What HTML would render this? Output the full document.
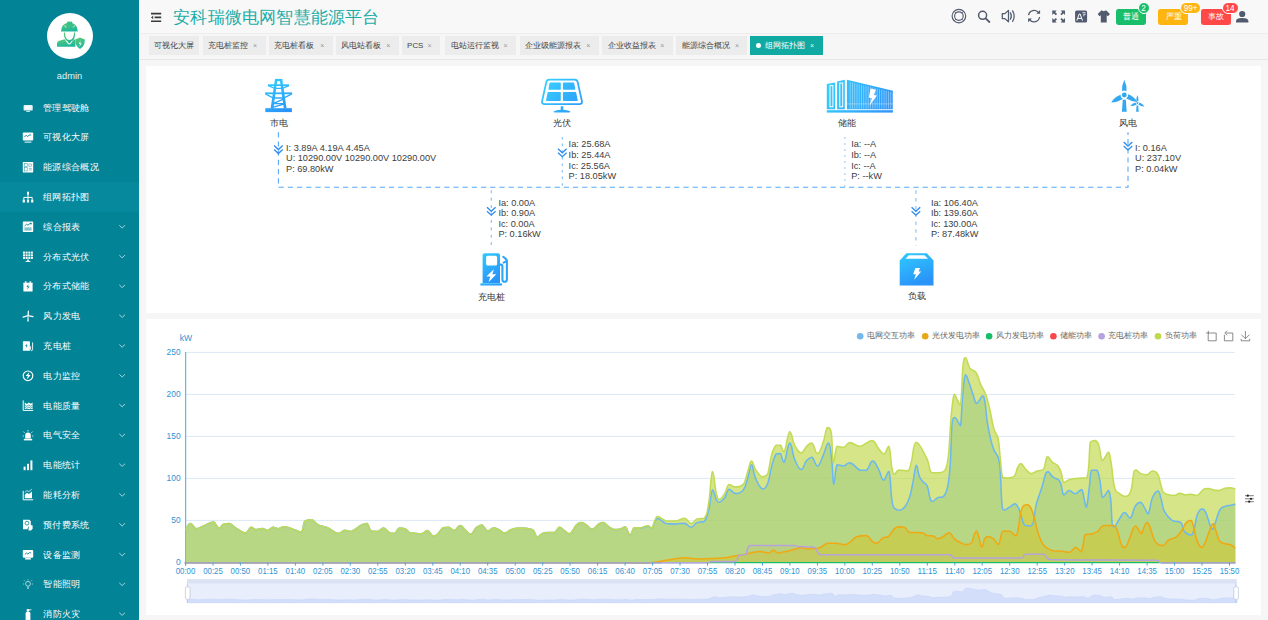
<!DOCTYPE html>
<html lang="zh"><head><meta charset="utf-8"><title>安科瑞微电网智慧能源平台</title>
<style>
*{box-sizing:border-box}
html,body{margin:0;padding:0}
body{width:1268px;height:620px;overflow:hidden;background:#f6f6f6;font-family:"Liberation Sans", sans-serif;position:relative}
.abs{position:absolute;left:0;top:0;overflow:visible}
div{position:absolute}
.side{left:0;top:0;width:139px;height:620px;background:#028396}
.active{left:0;width:139px;height:29.8px;background:#06899c}
.avatar{left:46.5px;top:13.4px;width:46px;height:46px;border-radius:50%;background:#fff}
.admin{left:0;width:139px;top:71.1px;text-align:center;font-size:9.3px;line-height:11px;color:#e4f1f4}
.mi{left:43.2px;font-size:9.25px;line-height:14px;height:14px;color:#fff;white-space:nowrap}
.hdr{left:139px;top:0;width:1129px;height:34.2px;background:#f8f8f8;border-bottom:1.2px solid #ededed}
.title{left:173.2px;top:5.6px;font-size:17.2px;line-height:23px;color:#1aada8;white-space:nowrap;width:206.2px}
.lvl{top:8.6px;height:16px;border-radius:2.4px;color:#fff;font-size:7.95px;line-height:16.4px}
.lvl span{position:absolute;top:0;white-space:nowrap}
.bdg{top:2.4px;height:11.6px;border-radius:6px;border:0.7px solid #fff;color:#fff;font-size:8.2px;line-height:11.1px;text-align:center}
.tabbar{left:139px;top:34.2px;width:1129px;height:25.6px;background:#f6f6f6;border-bottom:1px solid #e7e7e7}
.tab{top:35.8px;height:19.6px;background:#ececec;color:#444;font-size:7.95px;line-height:19.6px;padding-left:5.3px;white-space:nowrap}
.tab .x{position:absolute;right:8.4px;top:0;font-size:7px;color:#999}
.tab.on{background:#10aaa3;color:#fff;padding-left:14.6px}
.tab.on .x{color:#e6f7f6}
.tab.on i{position:absolute;left:6px;top:7.3px;width:5px;height:5px;border-radius:50%;background:#fff}
.jt{text-align:justify;text-align-last:justify;white-space:nowrap}
.tab .t{display:inline-block;position:static;height:19.6px;vertical-align:top}
.p1{left:146px;top:66.3px;width:1115.2px;height:246.5px;background:#fff}
.p2{left:146px;top:319.2px;width:1115.2px;height:295.7px;background:#fff}
.nl{font-size:9px;line-height:10px;color:#333;white-space:nowrap}
.dt{font-size:9.2px;line-height:10.57px;color:#3c3c3c;white-space:nowrap}
.lg{top:331.4px;font-size:7.9px;line-height:10px;color:#666;white-space:nowrap}
</style></head>
<body>
<div class="side"></div>
<div class="active" style="top:182.3px"></div>
<div class="avatar"></div>
<div class="admin">admin</div>
<svg class="abs" width="139" height="620" viewBox="0 0 139 620"><defs><linearGradient id="ga" x1="0" y1="0" x2="0.3" y2="1"><stop offset="0" stop-color="#5fcb76"/><stop offset="1" stop-color="#1fb79b"/></linearGradient></defs><g fill="url(#ga)"><path d="M61 31.6 q0.3 -7.4 6 -8.6 q2.4 -1.2 4.8 0 q5.6 1.2 6 8.6 z"/><rect x="66.9" y="21.6" width="5.4" height="3" rx="1"/><path d="M63.8 32.4 h1.2 q0 7 4.4 7.6 q4.4 -0.6 4.6 -7.6 h1.2 q0 7.6 -4.2 9 l-0.8 1.8 h-1.6 l-0.8 -1.8 q-4 -1.6 -4 -9z"/><path d="M57 46.8 v-3 q0 -2.4 3 -3.2 l4.6 -1.4 l3.6 5 h2.2 l3.4 -5 l1.6 0.5 v7.1z"/><path d="M75.2 39.4 l4.8 -1.8 l4.8 1.8 q0.2 6.6 -4.8 9.6 q-5 -3 -4.8 -9.6z"/></g><path d="M64.6 25.4 l1.4 2.2 M74.6 25.4 l-1.4 2.2" stroke="#fff" stroke-width="0.7"/><path d="M80.6 40.6 l-2 3.4 h1.5 l-0.9 3 l2.6 -3.8 h-1.6z" fill="#eafaf0"/><rect x="23.6" y="105" width="9.1" height="5.6" rx="1.2" fill="#e6f3f6"/><rect x="25.4" y="106.7" width="5.4" height="1.6" fill="#fff"/><rect x="26.3" y="110.8" width="3.6" height="1.1" fill="#d5ebef"/><rect x="22.8" y="132.4" width="10.4" height="8.2" rx="0.8" fill="#fff"/><path d="M24.4 137 l1.8 -1.8 l1.6 1.4 l1.4 -1.6 l1.9 0" fill="none" stroke="#028396" stroke-width="0.9"/><rect x="24.6" y="141.6" width="6.8" height="1" fill="#fff"/><rect x="22.8" y="162" width="10.4" height="10.4" rx="0.6" fill="#fff"/><rect x="24.3" y="163.4" width="2.9" height="3" fill="none" stroke="#028396" stroke-width="0.55" stroke-opacity="0.8"/><rect x="24.3" y="167.6" width="2.9" height="3.4" fill="none" stroke="#028396" stroke-width="0.55" stroke-opacity="0.8"/><rect x="28.9" y="164" width="2.8" height="2.2" fill="none" stroke="#028396" stroke-width="0.55" stroke-opacity="0.8"/><path d="M28.8 168.4 h3 M28.8 170 h3" stroke="#028396" stroke-width="0.6" stroke-opacity="0.8"/><rect x="27" y="191.7" width="2" height="3" fill="#fff"/><path d="M28 194.4 v3 M23.8 199.6 v-2.2 h8.4 v2.2 M28 197.2 v2.4" fill="none" stroke="#fff" stroke-width="1"/><rect x="22.7" y="199.6" width="2.2" height="2.9" fill="#fff"/><rect x="26.9" y="199.6" width="2.2" height="2.9" fill="#fff"/><rect x="31.1" y="199.6" width="2.2" height="2.9" fill="#fff"/><rect x="22.8" y="221.6" width="10.4" height="10.4" rx="0.8" fill="#fff"/><path d="M24.6 226 l2 -1.8 l1.4 1 l2.6 -2.2" fill="none" stroke="#028396" stroke-width="0.9"/><circle cx="30.9" cy="223.6" r="0.9" fill="#028396"/><line x1="24.4" y1="228.1" x2="31.6" y2="228.1" stroke="#028396" stroke-width="0.8"/><line x1="24.4" y1="229.9" x2="31.6" y2="229.9" stroke="#028396" stroke-width="0.8"/><path d="M119.3 225.3 l2.85 2.7 l2.85 -2.7" fill="none" stroke="#b9dde4" stroke-width="0.9"/><rect x="23" y="251.6" width="2" height="2" fill="#fff"/><rect x="25.6" y="251.6" width="2" height="2" fill="#fff"/><rect x="28.3" y="251.6" width="2" height="2" fill="#fff"/><rect x="30.9" y="251.6" width="2" height="2" fill="#fff"/><rect x="23" y="254.3" width="2" height="2" fill="#fff"/><rect x="25.6" y="254.3" width="2" height="2" fill="#fff"/><rect x="28.3" y="254.3" width="2" height="2" fill="#fff"/><rect x="30.9" y="254.3" width="2" height="2" fill="#fff"/><rect x="23" y="256.9" width="2" height="2" fill="#fff"/><rect x="25.6" y="256.9" width="2" height="2" fill="#fff"/><rect x="28.3" y="256.9" width="2" height="2" fill="#fff"/><rect x="30.9" y="256.9" width="2" height="2" fill="#fff"/><rect x="27.2" y="259.5" width="1.6" height="1.8" fill="#fff"/><rect x="25.6" y="260.9" width="4.8" height="1" fill="#fff"/><path d="M119.3 255.1 l2.85 2.7 l2.85 -2.7" fill="none" stroke="#b9dde4" stroke-width="0.9"/><rect x="23.4" y="282.8" width="9.2" height="8.8" rx="0.5" fill="#fff"/><rect x="24.8" y="281.4" width="1.8" height="1.4" fill="#fff"/><rect x="29.4" y="281.4" width="1.8" height="1.4" fill="#fff"/><path d="M28.6 284.2 l-2.2 2.8 h1.5 l-0.6 2.4 l2.3 -3 h-1.5z" fill="#028396"/><path d="M119.3 284.9 l2.85 2.7 l2.85 -2.7" fill="none" stroke="#b9dde4" stroke-width="0.9"/><path d="M28.1 315.3 L28.4 311.2 M27.9 315.7 L23.2 317.2 M28.2 315.7 L32.9 316.6" stroke="#fff" stroke-width="1.3" stroke-linecap="round" fill="none"/><path d="M27.6 316.6 h0.9 l0.3 5 h-1.5z" fill="#fff"/><path d="M119.3 314.7 l2.85 2.7 l2.85 -2.7" fill="none" stroke="#b9dde4" stroke-width="0.9"/><rect x="22.9" y="341.2" width="7" height="9.6" rx="0.5" fill="#fff"/><path d="M27 343.8 l-2 2.3 h1.3 l-0.5 2 l2 -2.5 h-1.3z" fill="#028396"/><path d="M30.6 346.2 v3.2 q0 1.2 1 1.2 q1 0 1 -1.2 v-7" fill="none" stroke="#fff" stroke-width="0.9"/><path d="M119.3 344.5 l2.85 2.7 l2.85 -2.7" fill="none" stroke="#b9dde4" stroke-width="0.9"/><circle cx="28" cy="375.8" r="4.8" fill="none" stroke="#fff" stroke-width="1.2"/><path d="M29.4 371.9 l-3.8 4.2 h2.2 l-1 3.5 l3.9 -4.6 h-2.3z" fill="#fff"/><path d="M119.3 374.3 l2.85 2.7 l2.85 -2.7" fill="none" stroke="#b9dde4" stroke-width="0.9"/><path d="M23.2 400.4 v10 h10" fill="none" stroke="#fff" stroke-width="1"/><path d="M24.8 402.6 l2 1.4 l2 -1.6 l2 1.4 l1.8 -1.4 v6.6 h-7.8z" fill="#fff"/><path d="M24.8 405.2 l2 1.2 l2 -1.4 l2 1.2 l1.8 -1.2" fill="none" stroke="#028396" stroke-width="0.7"/><path d="M24.8 407.2 l2 1.2 l2 -1.4 l2 1.2 l1.8 -1.2" fill="none" stroke="#028396" stroke-width="0.7"/><path d="M119.3 404.1 l2.85 2.7 l2.85 -2.7" fill="none" stroke="#b9dde4" stroke-width="0.9"/><path d="M25.2 438.4 v-3.2 q0 -2.8 2.8 -2.8 q2.8 0 2.8 2.8 v3.2z" fill="#fff"/><rect x="23.8" y="438.8" width="8.4" height="1.6" fill="#fff"/><path d="M28 431.6 v-1.6 M24.6 432.8 l-1.2 -1.2 M31.4 432.8 l1.2 -1.2 M23.9 436 h-1.3 M32.1 436 h1.3" stroke="#fff" stroke-width="0.8" fill="none"/><path d="M119.3 433.9 l2.85 2.7 l2.85 -2.7" fill="none" stroke="#b9dde4" stroke-width="0.9"/><rect x="23.6" y="466.6" width="2" height="3.6" fill="#fff"/><rect x="27" y="463.8" width="2" height="6.4" fill="#fff"/><rect x="30.4" y="460.4" width="2" height="9.8" fill="#fff"/><path d="M119.3 463.7 l2.85 2.7 l2.85 -2.7" fill="none" stroke="#b9dde4" stroke-width="0.9"/><path d="M23.2 490.8 v9 h10" fill="none" stroke="#fff" stroke-width="1"/><path d="M24.8 494.8 l2.2 -2 l1.8 1.2 l3.2 -2.6 v6.8 h-7.2z" fill="#fff"/><path d="M24.8 492.4 l2.2 -1.8 l1.8 1 l3 -2.4" fill="none" stroke="#fff" stroke-width="0.7"/><path d="M119.3 493.5 l2.85 2.7 l2.85 -2.7" fill="none" stroke="#b9dde4" stroke-width="0.9"/><path d="M23 519.8 h6.4 l1.4 1.4 v5.4 h-2.4 l-1 2.6 h-4.4z" fill="#fff"/><circle cx="27" cy="523.2" r="1.9" fill="none" stroke="#028396" stroke-width="0.8"/><path d="M29 524.4 l3.6 1 v3.4 l-1.6 1.6 h-2.6z" fill="#fff"/><path d="M119.3 523.3 l2.85 2.7 l2.85 -2.7" fill="none" stroke="#b9dde4" stroke-width="0.9"/><rect x="22.8" y="550" width="10.4" height="7.8" rx="1" fill="#fff"/><path d="M24.8 554.4 l1.8 -1.4 l1.4 1.2 l1.4 -1.6 l1.8 0.4" fill="none" stroke="#028396" stroke-width="0.9"/><path d="M25.6 558 h4.8 l0.8 1.4 h-6.4z" fill="#fff"/><path d="M119.3 553.1 l2.85 2.7 l2.85 -2.7" fill="none" stroke="#b9dde4" stroke-width="0.9"/><circle cx="28" cy="583.8" r="2.4" fill="none" stroke="#cfe7ec" stroke-width="0.8"/><path d="M27 587.2 h2 M27.2 588.4 h1.6" stroke="#cfe7ec" stroke-width="0.8"/><path d="M28 580.4 v-1.2 M24.9 581.2 l-1 -1 M31.1 581.2 l1 -1 M24.2 584 h-1.2 M31.8 584 h1.2" stroke="#cfe7ec" stroke-width="0.7" fill="none"/><path d="M119.3 582.9 l2.85 2.7 l2.85 -2.7" fill="none" stroke="#b9dde4" stroke-width="0.9"/><rect x="25.6" y="611.8" width="4.8" height="9" rx="1.6" fill="#fff"/><path d="M27 609.6 h2 v1.6 h-2z M29 609.8 h2.4" stroke="#fff" stroke-width="0.8" fill="#fff"/><path d="M119.3 612.7 l2.85 2.7 l2.85 -2.7" fill="none" stroke="#b9dde4" stroke-width="0.9"/></svg>
<div class="mi jt" style="top:100.6px;width:46.2px">管理驾驶舱</div>
<div class="mi jt" style="top:130.4px;width:46.2px">可视化大屏</div>
<div class="mi jt" style="top:160.2px;width:55.5px">能源综合概况</div>
<div class="mi jt" style="top:190px;width:46.2px">组网拓扑图</div>
<div class="mi jt" style="top:219.8px;width:37px">综合报表</div>
<div class="mi jt" style="top:249.6px;width:46.2px">分布式光伏</div>
<div class="mi jt" style="top:279.4px;width:46.2px">分布式储能</div>
<div class="mi jt" style="top:309.2px;width:37px">风力发电</div>
<div class="mi jt" style="top:339px;width:27.8px">充电桩</div>
<div class="mi jt" style="top:368.8px;width:37px">电力监控</div>
<div class="mi jt" style="top:398.6px;width:37px">电能质量</div>
<div class="mi jt" style="top:428.4px;width:37px">电气安全</div>
<div class="mi jt" style="top:458.2px;width:37px">电能统计</div>
<div class="mi jt" style="top:488px;width:37px">能耗分析</div>
<div class="mi jt" style="top:517.8px;width:46.2px">预付费系统</div>
<div class="mi jt" style="top:547.6px;width:37px">设备监测</div>
<div class="mi jt" style="top:577.4px;width:37px">智能照明</div>
<div class="mi jt" style="top:607.2px;width:37px">消防火灾</div>
<div class="hdr"></div>
<div class="title jt">安科瑞微电网智慧能源平台</div>
<svg class="abs" style="left:139px" width="1129" height="34" viewBox="139 0 1129 34"><path d="M151 13.6 h10.2 M154.6 17.4 h6.6 M151 21.3 h10.2" stroke="#3a3a3a" stroke-width="1.6" fill="none"/><path d="M153.2 15.6 l-2.2 1.8 l2.2 1.8z" fill="#444"/><circle cx="958.9" cy="16.1" r="6.8" fill="none" stroke="#515a6e" stroke-width="1.15"/><circle cx="958.9" cy="16.1" r="4.3" fill="none" stroke="#515a6e" stroke-width="1.15"/><path d="M954 11.2 l1.9 1.9 M963.8 11.2 l-1.9 1.9 M954 21 l1.9 -1.9 M963.8 21 l-1.9 -1.9" stroke="#515a6e" stroke-width="0.9"/><circle cx="982.6" cy="15.3" r="4" fill="none" stroke="#515a6e" stroke-width="1.5"/><path d="M985.6 18.4 l3.8 3.6" stroke="#515a6e" stroke-width="1.8" stroke-linecap="round"/><path d="M1002.3 13.6 h2.6 l3.6 -3.2 v11.4 l-3.6 -3.2 h-2.6z" fill="none" stroke="#515a6e" stroke-width="1.25" stroke-linejoin="round"/><path d="M1010.4 12.9 q1.9 3.2 0 6.4 M1012.6 10.9 q3.2 5.2 0 10.4" fill="none" stroke="#515a6e" stroke-width="1.25" stroke-linecap="round"/><path d="M1028.6 15.2 a5.6 5.6 0 0 1 10 -2.6 M1039.6 17 a5.6 5.6 0 0 1 -10 2.6" fill="none" stroke="#515a6e" stroke-width="1.3"/><path d="M1040.1 10 v3.8 h-3.8z M1028.1 22.2 v-3.8 h3.8z" fill="#515a6e"/><g stroke="#515a6e" stroke-width="1.8" fill="none"><path d="M1056.4 14.6 l-3.2 -3.2 M1061 14.6 l3.2 -3.2 M1056.4 18.6 l-3.2 3.2 M1061 18.6 l3.2 3.2"/></g><path d="M1052.3 10.5 h4.4 l-4.4 4.4z M1065 10.5 v4.4 l-4.4 -4.4z M1052.3 22.5 v-4.4 l4.4 4.4z M1065 22.5 h-4.4 l4.4 -4.4z" fill="#515a6e"/><rect x="1075.1" y="10.5" width="12" height="12" rx="1.6" fill="#515a6e"/><path d="M1076.8 20.6 l2.4 -6.6 h0.9 l2.4 6.6 M1077.7 18.4 h3.8" fill="none" stroke="#fff" stroke-width="1"/><path d="M1082.4 12.6 h3.2 M1082.8 14.2 h2.6 l-2.4 2" fill="none" stroke="#fff" stroke-width="0.7"/><path d="M1097.7 14 l3.6 -3.4 h1 q1.5 1.4 3 0 h1 l3.6 3.4 l-1.9 2.2 l-1.3 -0.9 v7.2 h-5.9 v-7.2 l-1.3 0.9z" fill="#515a6e"/><circle cx="1242.2" cy="14" r="3.1" fill="#515a6e"/><path d="M1236 22.6 v-1.4 q0 -3.2 6.2 -3.2 q6.2 0 6.2 3.2 v1.4z" fill="#515a6e"/></svg>
<div class="lvl" style="left:1115.5px;width:30.6px;background:#19be6b"><span class="jt" style="left:7.7px;width:15.9px">普通</span></div>
<div class="lvl" style="left:1158.1px;width:30.4px;background:#ffb50f"><span class="jt" style="left:7.5px;width:15.9px">严重</span></div>
<div class="lvl" style="left:1200.5px;width:30.3px;background:#ff4949"><span class="jt" style="left:7.5px;width:15.9px">事故</span></div>
<div class="bdg" style="left:1137.6px;width:12px;background:#19be6b">2</div>
<div class="bdg" style="left:1180.2px;width:20.8px;background:#ffb50f">99+</div>
<div class="bdg" style="left:1221.6px;width:17px;background:#ff4949">14</div>
<div class="tabbar"></div>
<div class="tab" style="left:149.2px;width:50.3px"><span class="t jt" style="width:39.9px">可视化大屏</span></div>
<div class="tab" style="left:202.5px;width:63px"><span class="t jt" style="width:39.9px">充电桩监控</span><span class="x">×</span></div>
<div class="tab" style="left:268.8px;width:63.9px"><span class="t jt" style="width:39.9px">充电桩看板</span><span class="x">×</span></div>
<div class="tab" style="left:335.8px;width:63px"><span class="t jt" style="width:39.9px">风电站看板</span><span class="x">×</span></div>
<div class="tab" style="left:401.8px;width:38.1px">PCS<span class="x">×</span></div>
<div class="tab" style="left:445.3px;width:70.7px"><span class="t jt" style="width:47.9px">电站运行监视</span><span class="x">×</span></div>
<div class="tab" style="left:519.7px;width:79.1px"><span class="t jt" style="width:55.9px">企业级能源报表</span><span class="x">×</span></div>
<div class="tab" style="left:602.4px;width:70.4px"><span class="t jt" style="width:47.9px">企业收益报表</span><span class="x">×</span></div>
<div class="tab" style="left:676.4px;width:71.1px"><span class="t jt" style="width:47.9px">能源综合概况</span><span class="x">×</span></div>
<div class="tab on" style="left:750.4px;width:72.2px"><i></i><span class="t jt" style="width:39.9px">组网拓扑图</span><span class="x">×</span></div>
<div class="p1"></div>
<svg class="abs" style="left:146px;top:66px" width="1115" height="247" viewBox="146 66 1115 247"><defs><linearGradient id="gb" x1="0" y1="0" x2="0.4" y2="1"><stop offset="0" stop-color="#2fcbff"/><stop offset="1" stop-color="#2a94f8"/></linearGradient><linearGradient id="gc" gradientUnits="userSpaceOnUse" x1="827" y1="80" x2="893" y2="112"><stop offset="0" stop-color="#36d0fb"/><stop offset="1" stop-color="#2f92fb"/></linearGradient></defs><path d="M278.4 132.2 V187.2 H1128 V132.2" stroke="#58a9fb" stroke-width="1.1" stroke-dasharray="5.2 4" fill="none"/><path d="M562.3 137 V187" stroke="#7fbdfc" stroke-width="1.1" stroke-dasharray="2.6 4" fill="none"/><path d="M844.9 137 V187" stroke="#9ccdfc" stroke-width="1.1" stroke-dasharray="2 4" fill="none"/><path d="M491.3 190.3 V245.5" stroke="#7fbdfc" stroke-width="1.1" stroke-dasharray="3 4.4" fill="none"/><path d="M915.9 190.3 V245.5" stroke="#7fbdfc" stroke-width="1.1" stroke-dasharray="3.4 4.4" fill="none"/><path d="M274.1 145.6 l4.3 4 l4.3 -4 M274.1 149.5 l4.3 4 l4.3 -4" fill="none" stroke="#2d8cf0" stroke-width="1.3"/><path d="M558 148.8 l4.3 4 l4.3 -4 M558 152.7 l4.3 4 l4.3 -4" fill="none" stroke="#2d8cf0" stroke-width="1.3"/><path d="M1123.7 142 l4.3 4 l4.3 -4 M1123.7 145.9 l4.3 4 l4.3 -4" fill="none" stroke="#2d8cf0" stroke-width="1.3"/><path d="M487 207.3 l4.3 4 l4.3 -4 M487 211.2 l4.3 4 l4.3 -4" fill="none" stroke="#2d8cf0" stroke-width="1.3"/><path d="M911.6 207.3 l4.3 4 l4.3 -4 M911.6 211.2 l4.3 4 l4.3 -4" fill="none" stroke="#2d8cf0" stroke-width="1.3"/><linearGradient id="gt" gradientUnits="userSpaceOnUse" x1="270" y1="79" x2="286" y2="112"><stop offset="0" stop-color="#2fcdff"/><stop offset="1" stop-color="#2a92f8"/></linearGradient><g fill="url(#gt)"><rect x="275" y="78.9" width="7.2" height="2.3"/><path d="M275 79 h2.5 l-4.1 29.4 h-2.8z M282.2 79 h-2.5 l4.1 29.4 h2.8z"/><rect x="268" y="84.3" width="21" height="1.7"/><rect x="265.1" y="92.4" width="27.1" height="1.8"/><rect x="265.3" y="108.2" width="26.6" height="3.9"/></g><path d="M268.2 85.6 l6.6 2.8 h7.6 l6.6 -2.8 M265.4 93.8 l8 4.2 h10.4 l8 -4.2 M274 103.2 l9.6 -4 M272.8 103.6 h11.6 M272.6 107.4 l12 -3.6" stroke="url(#gt)" stroke-width="1.35" fill="none"/><linearGradient id="gp" gradientUnits="userSpaceOnUse" x1="545" y1="80" x2="578" y2="110"><stop offset="0" stop-color="#38d0ff"/><stop offset="1" stop-color="#2d9cfa"/></linearGradient><path d="M549.4 79.7 h25.2 q2.6 0 3.1 2.4 l4.2 19 q0.6 3 -2.6 3 h-34.6 q-3.2 0 -2.6 -3 l4.2 -19 q0.5 -2.4 3.1 -2.4z" fill="none" stroke="url(#gp)" stroke-width="1.8"/><g fill="url(#gp)" stroke="url(#gp)" stroke-width="1.6" stroke-linejoin="round"><path d="M550.3 83.4 h9.7 v5.6 h-10.7z M563.7 83.4 h9.7 l1 5.6 h-10.7z M548.3 92.9 h11.7 v7.4 h-13.2z M563.7 92.9 h11.7 l1.5 7.4 h-13.2z"/></g><path d="M560.7 106.2 h2.6 v3.6 q4 0.4 6.8 1.4 q0.6 1 -0.6 1.2 h-15 q-1.2 -0.2 -0.6 -1.2 q2.8 -1 6.8 -1.4z" fill="url(#gp)"/><g fill="url(#gc)"><path d="M826.8 84 l8.3 -1.6 v26.8 h-8.3z M837.1 81.4 l7.7 -1.7 v29.5 h-7.7z"/><path d="M846.9 79.7 l46 11.1 v18.4 h-46z"/><rect x="826.8" y="110.2" width="66.1" height="2.4"/></g><rect x="830" y="85.6" width="2.9" height="21.2" fill="none" stroke="#fff" stroke-width="1"/><rect x="839.8" y="83" width="2.9" height="23.8" fill="none" stroke="#fff" stroke-width="1"/><path d="M850.2 82.1 V108.6 M852.5 82.6 V108.6 M854.7 83.2 V108.6 M857 83.7 V108.6 M859.2 84.3 V108.6 M861.5 84.8 V108.6 M863.7 85.4 V108.6 M866 85.9 V108.6 M868.2 86.4 V108.6 M870.5 87 V108.6 M872.7 87.5 V108.6 M875 88.1 V108.6 M877.2 88.6 V108.6 M879.5 89.2 V108.6 M881.7 89.7 V108.6 M884 90.2 V108.6 M886.2 90.8 V108.6 M888.5 91.3 V108.6 M890.7 91.9 V108.6 M893 92.4 V108.6" stroke="#e8f7ff" stroke-width="0.55" stroke-opacity="0.75" fill="none"/><path d="M846.9 103.9 h46" stroke="#dff3ff" stroke-width="0.5" stroke-opacity="0.8"/><path d="M870.6 88.4 l5.4 1.4 l-2.2 5.2 l3.2 0.6 l-7.4 9.8 l2.2 -7.2 l-3 -0.6z" fill="#fff"/><g fill="#33a8f2"><circle cx="1124.3" cy="95" r="2.4"/><path d="M1124.3 79.7 q2.8 6 2.2 11.6 q-2.2 -1.6 -4.4 0 q-0.6 -5.6 2.2 -11.6z"/><path d="M1111.3 102.4 q3.2 -5.4 9.4 -7.6 q-0.4 2.8 2.2 4 q-5.2 3.6 -11.6 3.6z"/><path d="M1137.4 101.9 q-6.2 -0.2 -11.4 -3.6 q2.4 -1.2 2.2 -4 q5.8 2.2 9.2 7.6z"/><path d="M1122.8 99.4 q1.5 0.8 3 0 l0.9 12.4 h-4.8z"/><circle cx="1137.4" cy="102.9" r="1"/><path d="M1137.4 95 q1.5 3.4 1 6.4 q-1 -0.6 -2 0 q-0.5 -3 1 -6.4z M1130.2 106.3 q1.8 -3 5.6 -3.8 q-0.2 1.4 1 2 q-2.8 1.8 -6.6 1.8z M1144.6 106.8 q-3.6 -0.2 -6.4 -2.2 q1.2 -0.6 1 -2 q3.4 1 5.4 4.2z M1136.6 105.2 q0.8 0.4 1.6 0 l0.5 6.6 h-2.6z"/></g><g fill="url(#gb)"><path d="M484.6 253.2 h13.4 q2 0 2 2 v28 h-17.4 v-28 q0 -2 2 -2z"/><rect x="480.3" y="283.2" width="21.8" height="2.4" rx="0.8"/></g><rect x="486.1" y="255.8" width="11" height="9.7" rx="1.6" fill="#fff"/><path d="M493.9 269.2 l-7.6 7.2 h4 l-1.8 5.8 l7.8 -8 h-4z" fill="#fff"/><path d="M500 264.6 h0.8 q1.6 0 1.6 1.6 v13.2 q0 2.3 2.25 2.3 q2.25 0 2.25 -2.3 v-18.6 q0 -1 -0.9 -1.7 l-2.7 -2.3 M503.6 262.6 l3.3 -1.6" fill="none" stroke="#2ea5fb" stroke-width="2.1" stroke-linejoin="round" stroke-linecap="round"/><path d="M906.4 253.2 h20.4 l6.7 7.3 v25.1 h-33.8 v-25.1z" fill="url(#gb)"/><path d="M908.9 255.2 h15.6 l3.5 3.6 h-22.6z" fill="#fff"/><path d="M915.4 268 h4.6 l-1.4 3.6 h2.6 l-7 8.2 l1.6 -5.6 h-2.6z" fill="#fff"/></svg>
<div class="nl jt" style="left:269.6px;top:117.6px;width:18.1px">市电</div>
<div class="nl jt" style="left:552.8px;top:117.6px;width:18.1px">光伏</div>
<div class="nl jt" style="left:838px;top:117.6px;width:18.1px">储能</div>
<div class="nl jt" style="left:1119px;top:117.6px;width:18.1px">风电</div>
<div class="nl jt" style="left:478px;top:291.6px;width:27.2px">充电桩</div>
<div class="nl jt" style="left:907.8px;top:291px;width:18.1px">负载</div>
<div class="dt" style="left:286px;top:142.6px">I: 3.89A 4.19A 4.45A<br>U: 10290.00V 10290.00V 10290.00V<br>P: 69.80kW</div>
<div class="dt" style="left:568.6px;top:139.4px">Ia: 25.68A<br>Ib: 25.44A<br>Ic: 25.56A<br>P: 18.05kW</div>
<div class="dt" style="left:851.2px;top:139.4px">Ia: --A<br>Ib: --A<br>Ic: --A<br>P: --kW</div>
<div class="dt" style="left:1135.1px;top:142.6px">I: 0.16A<br>U: 237.10V<br>P: 0.04kW</div>
<div class="dt" style="left:498.4px;top:197.8px">Ia: 0.00A<br>Ib: 0.90A<br>Ic: 0.00A<br>P: 0.16kW</div>
<div class="dt" style="left:930.9px;top:197.8px">Ia: 106.40A<br>Ib: 139.60A<br>Ic: 130.00A<br>P: 87.48kW</div>
<div class="p2"></div>
<svg class="abs" style="left:146px;top:319px" width="1115" height="295" viewBox="146 319 1115 295">
<style>.ax{font-family:'Liberation Sans', sans-serif;font-size:8.9px;fill:#2f93d4}</style>
<line x1="185.5" y1="520.4" x2="1235" y2="520.4" stroke="#dbe9f6" stroke-width="1"/>
<line x1="185.5" y1="478.4" x2="1235" y2="478.4" stroke="#dbe9f6" stroke-width="1"/>
<line x1="185.5" y1="436.4" x2="1235" y2="436.4" stroke="#dbe9f6" stroke-width="1"/>
<line x1="185.5" y1="394.4" x2="1235" y2="394.4" stroke="#dbe9f6" stroke-width="1"/>
<line x1="185.5" y1="352.4" x2="1235" y2="352.4" stroke="#dbe9f6" stroke-width="1"/>
<line x1="185.7" y1="352" x2="185.7" y2="565.6" stroke="#4aa5de" stroke-width="1"/>
<path d="M185.7 529.6C186.7 528.3 188.1 523.8 190.4 523.6C192.7 523.6 193.6 528 196.1 528.7C198.6 528.7 199.1 527.9 201.8 526.8C204.5 525.6 205.8 524.6 208.4 523.6C211 522.5 211.4 522 213.7 522C216 523 216.6 527.6 218.8 528.1C221 528.1 221.2 525.3 223.5 524.3C225.9 523.6 226.7 523.6 229.6 523.6C232.5 524.5 233.3 526.6 236.8 528.7C240.2 530.7 242.2 533 245.3 533C248.4 532.7 248.7 528.1 251 527.3C253.3 527.3 253.2 529.4 255.7 529.6C258.2 529.6 259.8 528.5 262.3 528.5C264.9 528.6 265.1 530.4 267.5 530.4C269.8 530.1 270.7 527.7 273.1 527.3C275.5 527.3 276 528.7 278.4 528.7C280.8 528.5 281.2 526.8 284.1 526.8C287 526.8 287.9 527.5 291.7 528.7C295.4 529.8 298.2 531.9 301.1 531.9C304.1 530.2 302.6 523.8 304.9 521.1C307.2 519.8 308.6 519.8 311.6 519.8C314.5 520.6 314.6 523.1 318.2 524.9C321.7 526.6 323.3 525.8 327.6 527.7C332 529.6 334.3 532.9 338.1 533.4C341.8 533.4 341.8 530.6 344.7 530.2C347.6 530.2 347.6 531.5 351.3 531.5C355.1 530.3 358.3 526.7 361.7 524.9C365.2 523.4 364.9 523.4 367 523.4C369.1 524.7 368.8 529.3 371.2 531.1C373.6 531.5 375.1 531.5 377.8 531.5C380.5 530.8 380.8 528.1 383.5 528.1C386.2 528.4 387.6 531.8 390.1 533C392.6 533.4 392.8 533.4 394.8 533.4C396.8 532.3 396.9 529.1 399.2 528.1C401.5 528.1 402.9 528.1 405.3 528.9C407.6 529.9 408.5 532.1 410 533C411.5 533 410 533 411.9 533C414.4 533.2 417.9 533.8 421.4 533.8C424.8 533.2 424.8 530.6 427.4 530.6C430 531.1 430.9 535.4 433.1 536.2C435.3 536.2 435.2 536.2 437.4 534.3C439.7 532.5 440.6 529.3 443.1 527.7C445.6 527.3 446.3 527.3 448.8 527.3C451.3 528 452 530.6 454.5 530.6C457 530.1 457.7 525.4 460.2 525.4C462.7 525.4 463.5 528.6 465.8 530.6C468.2 532.5 468.7 534.3 471 534.3C473.2 533.7 473.8 529.8 476.3 527.7C478.7 525.7 479.4 525.1 481.9 525.1C484.4 525.8 485.1 530.5 487.6 531.1C490.1 531.1 490.8 528.4 493.3 528.1C495.8 528.1 496.5 528.5 499 529.6C501.4 530.7 501.3 533 504.3 533C507.2 532.9 508.6 530.3 512.2 529.2C515.8 528.1 516.6 528.1 520.7 528.1C524.9 528.1 528.2 528.5 531.1 529.2C534 530 532.7 529.8 534 531.5C535.3 533.2 535.3 536.8 537.2 537.2C539.1 537.2 539.7 534.4 542.5 533.4C545.3 532.4 547.4 532.7 550.1 532.4C552.8 532.4 552.7 532.4 554.8 532.4C556.9 531.3 557.5 527.8 559.5 527.3C561.6 527.3 562 529.1 564.3 530.6C566.6 532 567.2 533.8 569.9 533.8C572.7 532.5 574.1 527.3 576.6 524.9C579.1 522.6 579 522.6 581.3 522.6C583.6 522.7 584.6 524 587 525.4C589.4 526.9 589.6 529.2 592.1 529.2C594.6 529 595.9 526 598.3 524.5C600.8 523 600.8 522.4 603.1 522.4C605.4 522.9 606.3 525.2 608.8 526.8C611.2 528.4 611.7 529.2 614.4 529.6C617.1 529.6 618.6 529.3 621.1 528.7C623.5 528 623.5 526.8 625.4 526.8C627.4 528.1 628 534.7 630 534.9C631.9 534.9 632.1 529.2 634.3 527.7C636.5 527.7 637.1 528.1 640 528.1C642.9 527.8 645 526.3 647.6 526.3C650.3 526.3 649.8 528 652 528C654.1 526.2 654.3 519.2 657.4 518.2C660.5 518.2 662.1 522.3 666.1 523.6C670.2 524.1 671.9 524.1 675.9 524.1C680 524 681.3 523.2 684.6 523.2C688 523.9 688.4 527.3 691.2 527.3C693.9 527.2 694.2 523.8 697.1 522.6C699.9 521.5 701.7 522.6 704.2 521.5C706.8 518.8 706.8 517.5 708.6 510.6C710.4 503.6 710.8 492.3 712.5 489.9C714.2 489.9 714.7 497 716.2 499.7C717.8 502.3 717.6 502.3 719.5 502.3C721.4 501.8 722.9 500.4 724.9 497.5C727 494.6 726.5 490.1 728.9 489.2C731.2 489.2 732.6 493.4 735.8 493.6C739 493.6 740.8 493.3 743.4 489.9C746.1 486.4 746 483.4 747.8 477.9C749.6 472.4 749.8 464.8 751.5 464.8C753.2 464.8 753.1 472.6 755.4 477.9C757.7 483.2 759.3 487.4 762 488.8C764.6 488.8 765.2 488.8 767.4 484.4C769.6 479.4 769.8 472.6 771.8 465.9C773.7 459.2 774.2 456.7 776.1 454C778 453.5 778.7 453.5 780.5 453.5C782.2 455.3 782.1 462.2 784.2 462.2C786.2 459.9 787.5 443.7 789.8 443.1C792.1 443.1 792.1 453.6 794.6 459.4C797.1 465.2 798.5 469.4 801.1 469.6C803.8 469.6 804.2 463.2 806.6 460.5C809 457.8 809.6 457.2 812 457.2C814.4 458.4 815.1 465.9 817.5 465.9C819.9 465.7 820.5 461.2 822.9 456.1C825.3 451.1 826.5 443.1 828.4 443.1C830.3 443.5 830.4 449.2 831.6 458.3C832.8 467.4 832.6 483 833.8 484.4C835 484.4 834.9 468.9 837.1 464.8C839.2 464.8 840.7 465.9 843.6 465.9C846.5 465.5 846.6 462.7 850.1 462.7C853.7 463.6 856.4 468.6 859.9 470.3C863.5 470.3 863.7 470.3 866.5 470.3C869.3 468.3 869.9 461.4 872.6 461.1C875.2 461.1 876.1 465 878.5 469.2C880.9 473.4 881.2 479.6 883.5 480.1C885.8 480.1 887.1 471.4 888.9 471.4C890.7 475.6 890.6 491.2 891.8 499.3C893 507.4 892.7 505.8 894.4 508.2C896.2 510.3 897.4 510.3 899.8 510.3C902.1 509.9 902.9 509.2 905.1 506.4C907.2 503.6 907.8 503 909.5 497.6C911.3 492.1 911.6 488.7 913.1 481.6C914.5 474.5 914.9 466.5 916.3 465.3C917.6 465.3 917.8 472.7 919.3 476.3C920.7 479.9 921.1 479.5 922.8 481.6C924.6 483.8 925.7 482.5 927.2 486C928.8 489.6 928.8 494.2 929.9 497.6C931 501 930.5 501.5 932.2 501.5C934 501.5 935.5 498.6 937.9 497.6C940.3 496.7 941.1 497.6 943.2 496.7C945.4 494.3 946.1 494.1 947.6 486.9C949.2 479.7 949.3 477.9 950.3 463.9C951.3 449.8 951.1 433.3 952.1 423C953.1 417.4 953.4 417.6 954.7 417.4C956.1 417.4 957 420.3 958.3 422.2C959.6 424 959.6 425.7 960.6 425.7C961.6 419.7 961.7 405.9 962.7 394.7C963.8 383.5 964 377.5 965.4 374.8C966.7 374.8 967.4 378.3 968.9 382.2C970.5 386.2 970.8 388.2 972.5 392.9C974.1 397.6 974.8 402 976.4 403.5C977.9 403.5 978.2 401.7 979.6 400C980.9 398.3 981.4 395.9 982.6 395.9C983.8 396.3 983.9 396.2 984.9 401.8C985.9 407.3 986 413.5 987.2 421.3C988.4 429.1 988.8 431 990.2 437.2C991.7 443.5 991.9 445 993.8 449.6C995.6 454.3 997.1 453.5 998.5 458.5C1000 463.6 999.5 462.2 1000.3 472.7C1001.1 483.3 1001.2 498.2 1002.1 506.4C1003 510 1002.5 510 1004.4 510C1006.3 510 1008.3 507.8 1010.6 506.4C1013 505.1 1013.3 503.8 1015 503.8C1016.8 504.2 1017 504.9 1018.6 508.2C1020.2 511.5 1020.8 515.1 1022.1 518.9C1023.5 522.6 1022.8 523.5 1024.8 525.1C1026.8 525.9 1029.1 525.9 1031 525.9C1033 525 1032.6 524.9 1033.7 520.6C1034.7 516.3 1034.6 511.9 1035.8 506.4C1037 501 1037.5 500.5 1039 495.8C1040.5 491.1 1041.1 490 1042.5 485.2C1044 480.3 1044.5 476.6 1045.7 473.6C1047 471.8 1046.6 471.8 1048.2 471.8C1049.9 472.6 1050.9 475.4 1053.2 477.2C1055.4 478.9 1056.7 478.1 1058.5 479.8C1060.3 481.6 1060 481.8 1061.2 485.2C1062.3 488.5 1062.1 493.7 1063.8 494.9C1065.6 494.9 1066.6 490.7 1069.1 490.5C1071.7 490.5 1072.6 493.7 1075.3 493.7C1078.1 493.5 1079.6 489.6 1081.6 489.6C1083.5 490.8 1083.1 495.4 1084.2 499.3C1085.3 503.2 1085.4 507.3 1086.5 507.3C1087.7 504.5 1088.3 494.8 1089.4 486.6C1090.5 478.5 1089.9 473.9 1091.5 470.3C1093.2 470.3 1095.2 470.3 1097 470.3C1098.8 472.5 1098.6 474.1 1099.8 480.1C1101 486.1 1101.1 494.4 1102.4 497.5C1103.7 497.5 1104.4 495.8 1105.7 494.3C1107 492.7 1107.4 490.6 1108.5 490.6C1109.6 491.8 1109.9 492.4 1110.7 499.7C1111.5 507 1111.4 517.7 1112.2 523.7C1113 526.9 1112.7 526.9 1114.4 526.9C1116.1 525.8 1117.6 521.4 1119.9 518.2C1122.1 515 1122.4 512.4 1124.7 512.4C1127 512.4 1128 518.2 1130.3 518.2C1132.6 516.9 1132.9 509.8 1135.1 506.3C1137.4 502.8 1138.4 502.3 1140.6 502.3C1142.7 502.8 1143.2 505.9 1144.9 508.4C1146.6 511 1146.5 513.9 1148.2 513.9C1149.9 511.5 1150.4 502.6 1152.5 497.5C1154.7 492.5 1156.1 491 1158 491C1159.9 491.5 1159.8 495.2 1161.3 499.7C1162.7 504.3 1162.1 507.1 1164.5 511.7C1166.9 516.3 1168.6 518 1172.1 520.4C1175.7 522.6 1178.2 520.4 1180.9 522.6C1183.5 525 1182 528.6 1184.1 531.3C1186.3 534 1188.5 535 1190.7 535C1192.8 534.8 1192.5 534.6 1193.9 530.2C1195.4 525.8 1195.5 519.7 1197.2 515C1198.9 510.3 1199.6 509.3 1201.6 508.9C1203.5 508.9 1204 509.1 1205.9 512.8C1207.8 516.5 1208.7 522.3 1210.3 525.9C1211.9 529.1 1211.9 529.1 1213.1 529.1C1214.3 528.2 1214.2 525.8 1215.7 521.5C1217.3 517.2 1217.9 512.9 1220.1 509.5C1222.2 506.3 1223.1 507.2 1225.5 506.3C1227.9 505.3 1228.8 505.6 1231 505.2C1233.1 504.7 1234.4 504.3 1235.3 504.1L1235.3 562 L185.7 562Z" fill="#6ab6f0" fill-opacity="0.56"/>
<path d="M186 562C281.5 562 520.1 562 620 562C640 562.1 632.7 562.4 640 562.4C647.3 562.3 647.3 562.3 653.1 561.8C658.8 561.2 659.2 560.9 666.1 560C673.1 559.1 677.9 558.1 684.6 557.8C691.4 557.8 690.2 558.8 696.6 558.9C703.1 558.9 707.3 558.8 714 558.5C720.7 558.1 722.3 558 727.1 557.4C731.9 556.8 732 556.3 735.8 555.7C739.7 555 741.2 555.1 744.5 554.6C747.9 554 747.7 553.7 751.1 553C754.4 552.4 755.9 551.5 759.8 551.5C763.6 551.5 765.5 553 768.5 553C771.5 552.8 771.1 550.2 773.3 550.2C775.4 550.2 775 552.9 778.3 553C781.5 553 784.3 551.7 788.1 550.9C791.9 550 792.8 549.8 795.7 549.1C798.6 548.4 798.5 547.7 801.1 547.6C803.8 547.6 803.9 548.5 807.7 548.7C811.5 548.7 814.3 548.7 818.6 548.2C822.9 547.1 823.4 544.3 827.3 543.2C831.1 543.2 832.2 543.2 836 543.2C839.8 543.6 841.6 544.8 844.7 544.8C847.8 544.5 847.5 543.9 850.1 542.2C852.8 540.4 853.1 538.1 856.7 536.7C860.3 535.6 862.9 535.6 866.5 535.6C870.1 536.8 870.6 540.5 873 542.2C875.4 543.2 875.2 543.2 877.4 543.2C879.5 542.3 880.4 539.2 882.8 537.8C885.2 536.7 885.7 537.8 888.3 536.7C890.8 534.7 891.9 530.8 894.4 528.6C897 526.8 897.4 527 899.8 526.8C902.1 526.8 902.9 526.8 905.1 527.7C907.2 528.9 905.8 531.1 909.5 532.2C913.2 532.7 918 532.2 921.9 532.7C925.8 533.5 924.9 535 927.2 535.7C929.6 535.7 930.2 535.7 932.6 535.7C934.9 536.4 935.5 538.5 937.9 538.7C940.2 538.7 940.7 537.9 943.2 536.6C945.7 535.3 946.9 532.7 949.4 532.7C952 533.3 952.2 537 954.7 539.2C957.3 541.5 958.4 541.6 960.9 542.8C963.5 544 963.9 544.6 966.3 544.6C968.6 544.6 969.8 544.6 971.6 542.8C973.3 540.7 973.2 537.4 974.2 534.8C975.3 532.2 975.6 530.9 976.6 530.9C977.5 531.3 977.6 533.1 978.7 536.6C979.8 540.1 980.3 546.5 981.7 546.9C983.1 546.9 983.4 540.6 984.9 538.4C986.4 536.6 986.5 536.6 988.4 536.6C990.4 536.8 991.5 537.5 993.8 539.2C996 541 996.8 544.6 998.5 544.6C1000.3 543.2 1000.5 536 1001.7 533C1003 530.9 1002.5 531.2 1004.4 530.9C1006.4 530.9 1008.2 530.9 1010.6 531.6C1013.1 532.7 1013.9 535.7 1015.6 535.7C1017.2 535.2 1016.9 534.8 1018.1 529.5C1019.2 524.2 1019.6 517 1020.9 511.8C1022.2 506.5 1022.5 507.1 1023.9 505.5C1025.4 504.7 1025.9 504.7 1027.5 504.7C1029 505.2 1029.4 505.1 1031 508.2C1032.6 511.3 1033 513.4 1034.6 518.9C1036.1 524.3 1036.3 527.6 1038.1 533C1039.9 538.5 1040.4 540.3 1042.5 543.7C1044.7 547.1 1045.5 547.1 1047.9 548.7C1050.2 550.2 1050.4 550.2 1053.2 550.8C1055.9 551.1 1056.8 550.8 1060.3 551.1C1063.8 551.4 1066.4 552.2 1069.1 552.2C1071.9 551.9 1071.3 551 1072.7 549.9C1074.1 548.8 1074.2 547.4 1075.3 547.2C1076.5 547.2 1076.7 548 1078 549C1079.3 550 1080 551.7 1081.2 551.7C1082.4 550.5 1082.5 547.4 1083.3 543.7C1084.2 540 1083.3 537 1085.1 534.8C1087.1 533.9 1089.5 534.6 1092.2 533.9C1094.9 533.2 1096 532.5 1097.5 531.6C1099.1 530.7 1097.8 531.1 1099.2 529.8C1100.5 528.4 1100.4 526.4 1103.5 525.4C1106.6 525.4 1110.3 525.4 1113.3 525.4C1116.3 526.5 1115.6 526.3 1117.2 530.2C1118.9 534.1 1119.3 539.5 1120.9 543.3C1122.6 547.1 1123 547.6 1124.7 547.6C1126.3 547.2 1126.8 545.2 1128.6 541.1C1130.4 537 1131.3 532.5 1132.9 529.1C1134.5 525.9 1134.3 525.9 1135.8 525.9C1137.2 526.3 1138.2 529.6 1139.5 531.3C1140.8 533 1140.4 533.5 1141.6 533.5C1142.8 532 1143.6 527.2 1144.9 524.8C1146.2 522.6 1146.3 522.6 1147.5 522.6C1148.7 523.3 1148.9 524.2 1150.4 528C1151.8 531.9 1152.4 536.3 1154.3 540C1156.2 543.8 1157.1 543.8 1159.1 545C1161.1 545.5 1161.3 545.5 1163.4 545.5C1165.6 544.4 1166 541.9 1168.9 540C1171.8 538.1 1173.6 538.9 1176.5 536.8C1179.4 534.6 1179.8 533.3 1181.9 530.2C1184.1 527.1 1184.3 524.7 1186.3 522.6C1188.3 520.4 1189.4 520.4 1191.1 520.4C1192.8 521.6 1192.6 523.5 1193.9 528C1195.3 532.6 1195.5 536.8 1197.2 541.1C1198.9 545.4 1199.9 547.2 1201.6 547.6C1203.2 547.6 1203.4 546.2 1204.8 543.3C1206.3 540.4 1206.7 538.4 1208.1 534.6C1209.5 530.7 1210.3 528.3 1211.4 525.9C1212.5 523.7 1212.1 523.7 1213.1 523.7C1214.1 524.6 1214.3 526.4 1215.7 530.2C1217.2 534.1 1217.5 538.1 1219.6 541.1C1221.8 543.7 1223 542.9 1225.5 543.7C1228 544.6 1228.8 544.1 1231 545C1233.1 546 1234.4 547.4 1235.3 548.1L1235.3 562 L186 562Z" fill="#efa913" fill-opacity="0.6"/>
<path d="M186 562C285.9 562 525.3 562 640 562C707.5 562 691.7 562 707.5 562C711.9 561.8 707.5 561.3 711.9 561.1C717.9 561.1 728.7 561.1 734.7 561.1C739.1 559.8 736.7 556.7 739.1 555.2C741.5 554.6 743.2 555.2 745.6 554.6C748 552.4 745.6 547.4 750 545.4C760.8 545.4 784.1 545.4 794.6 545.4C797.9 545.7 794.6 546.2 797.9 546.5C802 546.8 808.8 546.5 813.1 546.9C817.4 548.1 815.6 550.2 817.5 552C819.4 553.7 817.5 554.2 821.8 554.8C837.4 554.8 860.2 554.8 888.3 554.8C916.3 554.8 934.8 554.7 949.4 554.7C954.7 555.4 949.4 557.2 954.7 557.9C970.5 557.9 1005.6 557.9 1021.3 557.9C1025.7 557.1 1021.3 555.1 1025.7 554.3C1030.6 554.3 1038 554.3 1043.4 554.3C1048.9 555.4 1043.4 558 1050.5 559.3C1075.5 560.1 1132.5 559.5 1156.9 560.1C1161.3 560.7 1156.9 561.6 1161.3 562C1178.5 562 1219 562 1235.3 562L1235.3 562 L186 562Z" fill="#b7a3dc" fill-opacity="0.35"/>
<path d="M185.7 529.6C186.7 528.3 188.1 523.8 190.4 523.6C192.7 523.6 193.6 528 196.1 528.7C198.6 528.7 199.1 527.9 201.8 526.8C204.5 525.6 205.8 524.6 208.4 523.6C211 522.5 211.4 522 213.7 522C216 523 216.6 527.6 218.8 528.1C221 528.1 221.2 525.3 223.5 524.3C225.9 523.6 226.7 523.6 229.6 523.6C232.5 524.5 233.3 526.6 236.8 528.7C240.2 530.7 242.2 533 245.3 533C248.4 532.7 248.7 528.1 251 527.3C253.3 527.3 253.2 529.4 255.7 529.6C258.2 529.6 259.8 528.5 262.3 528.5C264.9 528.6 265.1 530.4 267.5 530.4C269.8 530.1 270.7 527.7 273.1 527.3C275.5 527.3 276 528.7 278.4 528.7C280.8 528.5 281.2 526.8 284.1 526.8C287 526.8 287.9 527.5 291.7 528.7C295.4 529.8 298.2 531.9 301.1 531.9C304.1 530.2 302.6 523.8 304.9 521.1C307.2 519.8 308.6 519.8 311.6 519.8C314.5 520.6 314.6 523.1 318.2 524.9C321.7 526.6 323.3 525.8 327.6 527.7C332 529.6 334.3 532.9 338.1 533.4C341.8 533.4 341.8 530.6 344.7 530.2C347.6 530.2 347.6 531.5 351.3 531.5C355.1 530.3 358.3 526.7 361.7 524.9C365.2 523.4 364.9 523.4 367 523.4C369.1 524.7 368.8 529.3 371.2 531.1C373.6 531.5 375.1 531.5 377.8 531.5C380.5 530.8 380.8 528.1 383.5 528.1C386.2 528.4 387.6 531.8 390.1 533C392.6 533.4 392.8 533.4 394.8 533.4C396.8 532.3 396.9 529.1 399.2 528.1C401.5 528.1 402.9 528.1 405.3 528.9C407.6 529.9 408.5 532.1 410 533C411.5 533 410 533 411.9 533C414.4 533.2 417.9 533.8 421.4 533.8C424.8 533.2 424.8 530.6 427.4 530.6C430 531.1 430.9 535.4 433.1 536.2C435.3 536.2 435.2 536.2 437.4 534.3C439.7 532.5 440.6 529.3 443.1 527.7C445.6 527.3 446.3 527.3 448.8 527.3C451.3 528 452 530.6 454.5 530.6C457 530.1 457.7 525.4 460.2 525.4C462.7 525.4 463.5 528.6 465.8 530.6C468.2 532.5 468.7 534.3 471 534.3C473.2 533.7 473.8 529.8 476.3 527.7C478.7 525.7 479.4 525.1 481.9 525.1C484.4 525.8 485.1 530.5 487.6 531.1C490.1 531.1 490.8 528.4 493.3 528.1C495.8 528.1 496.5 528.5 499 529.6C501.4 530.7 501.3 533 504.3 533C507.2 532.9 508.6 530.3 512.2 529.2C515.8 528.1 516.6 528.1 520.7 528.1C524.9 528.1 528.2 528.5 531.1 529.2C534 530 532.7 529.8 534 531.5C535.3 533.2 535.3 536.8 537.2 537.2C539.1 537.2 539.7 534.4 542.5 533.4C545.3 532.4 547.4 532.7 550.1 532.4C552.8 532.4 552.7 532.4 554.8 532.4C556.9 531.3 557.5 527.8 559.5 527.3C561.6 527.3 562 529.1 564.3 530.6C566.6 532 567.2 533.8 569.9 533.8C572.7 532.5 574.1 527.3 576.6 524.9C579.1 522.6 579 522.6 581.3 522.6C583.6 522.7 584.6 524 587 525.4C589.4 526.9 589.6 529.2 592.1 529.2C594.6 529 595.9 526 598.3 524.5C600.8 523 600.8 522.4 603.1 522.4C605.4 522.9 606.3 525.2 608.8 526.8C611.2 528.4 611.7 529.2 614.4 529.6C617.1 529.6 618.6 529.3 621.1 528.7C623.5 528 623.5 526.8 625.4 526.8C627.4 528.1 628 534.7 630 534.9C631.9 534.9 632.1 529.2 634.3 527.7C636.5 527.7 637.1 528.1 640 528.1C642.9 527.7 645 525.8 647.6 525.8C650.3 525.8 649.8 528 652 528C654.1 525.9 654.3 518 657.4 516.5C660.5 516.5 662.1 520 666.1 521C670.2 521 671.9 521 675.9 521C680 520.4 681.3 518.2 684.6 518.2C688 518.8 688.4 523.5 691.2 523.6C693.9 523.6 694.2 520 697.1 518.9C699.9 518.2 701.7 518.9 704.2 518.2C706.8 514.9 706.8 514.3 708.6 504C710.4 493.7 710.8 473.8 712.5 471.4C714.2 471.4 714.7 487 716.2 493.2C717.8 499.3 717.6 499.3 719.5 499.3C721.4 499.3 722.9 496.4 724.9 493.2C727 489.9 726.5 485.8 728.9 484.4C731.2 484.4 732.6 487.1 735.8 487.1C739 487.1 740.8 487.1 743.4 484.4C746.1 481 746 476.5 747.8 471.4C749.6 466.2 749.8 461.6 751.5 461.1C753.2 461.1 753.1 465.7 755.4 469.2C757.7 472.6 759.3 475.6 762 476.8C764.6 476.8 765.2 476.8 767.4 474.6C769.6 469.6 769.8 460.4 771.8 454C773.7 447.5 774.2 447.2 776.1 445.2C778 445.2 778.7 445.2 780.5 445.2C782.2 446.7 782.1 451.8 784.2 451.8C786.2 448.8 787.5 433.2 789.8 431.7C792.1 431.7 792.1 440.6 794.6 445.2C797.1 449.9 798.5 452.6 801.1 452.9C803.8 452.9 804.2 448.5 806.6 446.3C809 444.2 809.6 443.1 812 443.1C814.4 444.6 815.1 453.5 817.5 453.5C819.9 453.5 820.8 448.8 822.9 443.1C825.1 437.3 825.5 429.8 827.3 427.4C829.1 427.4 829.9 427.4 831.2 432.2C832.5 439.9 832.1 459.6 833.4 462.7C834.7 462.7 834.8 449.7 837.1 446.3C839.3 446.3 840.7 447.4 843.6 447.4C846.5 446.6 846.6 442.9 850.1 442.6C853.7 442.6 855.2 446.3 859.9 446.3C864.7 445.9 867.9 440.5 871.9 440.5C876 440.9 875.8 445.5 878.5 448.5C881.1 451.5 881.6 454 883.9 454C886.2 453.5 887.2 446.3 888.9 446.3C890.6 449.3 890.6 461.3 891.8 467.4C893 473.5 892.9 473.6 894.4 474.2C896 474.2 895.9 470.8 898.9 470.1C901.8 470.1 905 471 907.7 471C910.5 469.2 909.4 468.4 911.3 462.1C913.2 455.8 912.9 443.2 916.3 442.2C919.6 442.2 923.6 452.5 926.4 457.7C929 462.8 927.9 462.3 929 465.6C930.2 469 929.3 471.2 931.7 472.7C934 472.7 936.7 472.7 939.7 472.7C942.6 472.2 943 472.7 945 470.1C946.9 466.2 947.2 466.9 948.5 455C949.9 443.1 949.9 429.3 951.2 415.9C952.4 402.6 952.8 397.8 954.2 394.3C955.6 394.3 956 397.6 957.4 400C958.8 402.4 959.3 405.3 960.6 405.3C961.8 397.5 961.9 375 963.1 364.5C964.2 357.8 964.3 357.8 965.7 357.8C967.2 358.6 967.6 364.8 969.8 368.1C972.1 371.3 973.7 369 976 372.5C978.4 376 978.3 379.1 980.5 384C982.6 388.9 983.8 389.6 985.8 394.7C987.7 399.7 987.6 399.7 989.3 407.1C991.1 414.5 991.8 421.3 993.8 428.4C995.7 435.4 996.8 432.4 998.2 439C999.6 445.6 999.3 450.2 1000.3 458.5C1001.3 466.9 1001.1 472.9 1002.6 477.2C1004.1 478.1 1004.5 478.1 1007.1 478.1C1009.6 477.9 1011.8 478.1 1014.2 476.3C1016.5 473.9 1016.2 470.2 1017.7 467.4C1019.2 464.6 1019.1 463.5 1020.9 463.5C1022.7 463.9 1023.5 467 1025.7 469.2C1027.9 471.4 1028.5 473.2 1031 473.6C1033.5 473.6 1034.5 471.9 1037.2 471C1039.9 470 1041.5 471 1043.4 469.2C1045.4 466.7 1045.1 462.2 1046.1 459.4C1047.1 456.8 1046.5 456.8 1047.9 456.8C1049.2 457.4 1050.1 460.1 1052.3 462.1C1054.4 464 1055.7 463.3 1057.6 465.6C1059.6 468 1059.8 469 1061.2 472.7C1062.5 476.4 1062.1 480.9 1063.8 482.5C1065.6 482.5 1066.4 480.7 1069.1 479.8C1071.9 478.9 1072.3 478.9 1076.2 478.4C1080.1 477.9 1083.8 478.4 1086.9 477.7C1090 469.7 1088.7 450.2 1090.4 442C1092.2 440.5 1093 440.5 1094.8 440.5C1096.6 440.9 1096.9 440.5 1098.5 444.2C1100.1 448.6 1100.6 457.6 1102 460.5C1103.4 460.5 1103.6 459.1 1105 457.2C1106.5 455.4 1107.2 452.2 1108.5 452.2C1109.9 453.4 1109.8 455.1 1111.1 462.7C1112.4 470.3 1112.7 479.9 1114.4 486.6C1116.1 493.2 1116.4 491 1118.8 493.2C1121.2 495.3 1122.7 496.4 1125.3 496.4C1127.9 496 1128.8 496.4 1130.8 491C1132.7 485.5 1132.8 476 1134 471.4C1135.2 469.9 1134.8 469.9 1136.2 469.9C1137.6 470.3 1138.2 472.5 1140.6 473.6C1143 474.6 1144.5 474.7 1147.1 474.7C1149.7 474.1 1150.1 471 1152.5 471C1154.9 471 1156.1 471.2 1158 474.7C1159.9 478.1 1159.8 482.6 1161.3 486.6C1162.7 490.7 1161.6 491.3 1164.5 493.2C1167.4 495.1 1171 495.4 1174.3 495.4C1177.7 495.4 1177.4 493.3 1179.8 493.2C1182.2 493.2 1182.8 494.7 1185.2 494.9C1187.6 494.9 1188 494.3 1190.7 494.3C1193.3 494.4 1194.3 495.4 1197.2 495.4C1200.1 494.3 1201.3 490.8 1203.7 489.3C1206.1 488.4 1205 488.4 1208.1 488.4C1211.2 488.7 1214.3 490.6 1217.9 490.6C1221.5 490.6 1221.8 489 1224.4 488.4C1227.1 487.8 1227.5 487.7 1229.9 487.7C1232.3 487.8 1234.1 488.6 1235.3 488.8L1235.3 562 L185.7 562Z" fill="#bed746" fill-opacity="0.65"/>
<path d="M185.7 529.6C186.7 528.3 188.1 523.8 190.4 523.6C192.7 523.6 193.6 528 196.1 528.7C198.6 528.7 199.1 527.9 201.8 526.8C204.5 525.6 205.8 524.6 208.4 523.6C211 522.5 211.4 522 213.7 522C216 523 216.6 527.6 218.8 528.1C221 528.1 221.2 525.3 223.5 524.3C225.9 523.6 226.7 523.6 229.6 523.6C232.5 524.5 233.3 526.6 236.8 528.7C240.2 530.7 242.2 533 245.3 533C248.4 532.7 248.7 528.1 251 527.3C253.3 527.3 253.2 529.4 255.7 529.6C258.2 529.6 259.8 528.5 262.3 528.5C264.9 528.6 265.1 530.4 267.5 530.4C269.8 530.1 270.7 527.7 273.1 527.3C275.5 527.3 276 528.7 278.4 528.7C280.8 528.5 281.2 526.8 284.1 526.8C287 526.8 287.9 527.5 291.7 528.7C295.4 529.8 298.2 531.9 301.1 531.9C304.1 530.2 302.6 523.8 304.9 521.1C307.2 519.8 308.6 519.8 311.6 519.8C314.5 520.6 314.6 523.1 318.2 524.9C321.7 526.6 323.3 525.8 327.6 527.7C332 529.6 334.3 532.9 338.1 533.4C341.8 533.4 341.8 530.6 344.7 530.2C347.6 530.2 347.6 531.5 351.3 531.5C355.1 530.3 358.3 526.7 361.7 524.9C365.2 523.4 364.9 523.4 367 523.4C369.1 524.7 368.8 529.3 371.2 531.1C373.6 531.5 375.1 531.5 377.8 531.5C380.5 530.8 380.8 528.1 383.5 528.1C386.2 528.4 387.6 531.8 390.1 533C392.6 533.4 392.8 533.4 394.8 533.4C396.8 532.3 396.9 529.1 399.2 528.1C401.5 528.1 402.9 528.1 405.3 528.9C407.6 529.9 408.5 532.1 410 533C411.5 533 410 533 411.9 533C414.4 533.2 417.9 533.8 421.4 533.8C424.8 533.2 424.8 530.6 427.4 530.6C430 531.1 430.9 535.4 433.1 536.2C435.3 536.2 435.2 536.2 437.4 534.3C439.7 532.5 440.6 529.3 443.1 527.7C445.6 527.3 446.3 527.3 448.8 527.3C451.3 528 452 530.6 454.5 530.6C457 530.1 457.7 525.4 460.2 525.4C462.7 525.4 463.5 528.6 465.8 530.6C468.2 532.5 468.7 534.3 471 534.3C473.2 533.7 473.8 529.8 476.3 527.7C478.7 525.7 479.4 525.1 481.9 525.1C484.4 525.8 485.1 530.5 487.6 531.1C490.1 531.1 490.8 528.4 493.3 528.1C495.8 528.1 496.5 528.5 499 529.6C501.4 530.7 501.3 533 504.3 533C507.2 532.9 508.6 530.3 512.2 529.2C515.8 528.1 516.6 528.1 520.7 528.1C524.9 528.1 528.2 528.5 531.1 529.2C534 530 532.7 529.8 534 531.5C535.3 533.2 535.3 536.8 537.2 537.2C539.1 537.2 539.7 534.4 542.5 533.4C545.3 532.4 547.4 532.7 550.1 532.4C552.8 532.4 552.7 532.4 554.8 532.4C556.9 531.3 557.5 527.8 559.5 527.3C561.6 527.3 562 529.1 564.3 530.6C566.6 532 567.2 533.8 569.9 533.8C572.7 532.5 574.1 527.3 576.6 524.9C579.1 522.6 579 522.6 581.3 522.6C583.6 522.7 584.6 524 587 525.4C589.4 526.9 589.6 529.2 592.1 529.2C594.6 529 595.9 526 598.3 524.5C600.8 523 600.8 522.4 603.1 522.4C605.4 522.9 606.3 525.2 608.8 526.8C611.2 528.4 611.7 529.2 614.4 529.6C617.1 529.6 618.6 529.3 621.1 528.7C623.5 528 623.5 526.8 625.4 526.8C627.4 528.1 628 534.7 630 534.9C631.9 534.9 632.1 529.2 634.3 527.7C636.5 527.7 637.1 528.1 640 528.1C642.9 527.8 645 526.3 647.6 526.3C650.3 526.3 649.8 528 652 528C654.1 526.2 654.3 519.2 657.4 518.2C660.5 518.2 662.1 522.3 666.1 523.6C670.2 524.1 671.9 524.1 675.9 524.1C680 524 681.3 523.2 684.6 523.2C688 523.9 688.4 527.3 691.2 527.3C693.9 527.2 694.2 523.8 697.1 522.6C699.9 521.5 701.7 522.6 704.2 521.5C706.8 518.8 706.8 517.5 708.6 510.6C710.4 503.6 710.8 492.3 712.5 489.9C714.2 489.9 714.7 497 716.2 499.7C717.8 502.3 717.6 502.3 719.5 502.3C721.4 501.8 722.9 500.4 724.9 497.5C727 494.6 726.5 490.1 728.9 489.2C731.2 489.2 732.6 493.4 735.8 493.6C739 493.6 740.8 493.3 743.4 489.9C746.1 486.4 746 483.4 747.8 477.9C749.6 472.4 749.8 464.8 751.5 464.8C753.2 464.8 753.1 472.6 755.4 477.9C757.7 483.2 759.3 487.4 762 488.8C764.6 488.8 765.2 488.8 767.4 484.4C769.6 479.4 769.8 472.6 771.8 465.9C773.7 459.2 774.2 456.7 776.1 454C778 453.5 778.7 453.5 780.5 453.5C782.2 455.3 782.1 462.2 784.2 462.2C786.2 459.9 787.5 443.7 789.8 443.1C792.1 443.1 792.1 453.6 794.6 459.4C797.1 465.2 798.5 469.4 801.1 469.6C803.8 469.6 804.2 463.2 806.6 460.5C809 457.8 809.6 457.2 812 457.2C814.4 458.4 815.1 465.9 817.5 465.9C819.9 465.7 820.5 461.2 822.9 456.1C825.3 451.1 826.5 443.1 828.4 443.1C830.3 443.5 830.4 449.2 831.6 458.3C832.8 467.4 832.6 483 833.8 484.4C835 484.4 834.9 468.9 837.1 464.8C839.2 464.8 840.7 465.9 843.6 465.9C846.5 465.5 846.6 462.7 850.1 462.7C853.7 463.6 856.4 468.6 859.9 470.3C863.5 470.3 863.7 470.3 866.5 470.3C869.3 468.3 869.9 461.4 872.6 461.1C875.2 461.1 876.1 465 878.5 469.2C880.9 473.4 881.2 479.6 883.5 480.1C885.8 480.1 887.1 471.4 888.9 471.4C890.7 475.6 890.6 491.2 891.8 499.3C893 507.4 892.7 505.8 894.4 508.2C896.2 510.3 897.4 510.3 899.8 510.3C902.1 509.9 902.9 509.2 905.1 506.4C907.2 503.6 907.8 503 909.5 497.6C911.3 492.1 911.6 488.7 913.1 481.6C914.5 474.5 914.9 466.5 916.3 465.3C917.6 465.3 917.8 472.7 919.3 476.3C920.7 479.9 921.1 479.5 922.8 481.6C924.6 483.8 925.7 482.5 927.2 486C928.8 489.6 928.8 494.2 929.9 497.6C931 501 930.5 501.5 932.2 501.5C934 501.5 935.5 498.6 937.9 497.6C940.3 496.7 941.1 497.6 943.2 496.7C945.4 494.3 946.1 494.1 947.6 486.9C949.2 479.7 949.3 477.9 950.3 463.9C951.3 449.8 951.1 433.3 952.1 423C953.1 417.4 953.4 417.6 954.7 417.4C956.1 417.4 957 420.3 958.3 422.2C959.6 424 959.6 425.7 960.6 425.7C961.6 419.7 961.7 405.9 962.7 394.7C963.8 383.5 964 377.5 965.4 374.8C966.7 374.8 967.4 378.3 968.9 382.2C970.5 386.2 970.8 388.2 972.5 392.9C974.1 397.6 974.8 402 976.4 403.5C977.9 403.5 978.2 401.7 979.6 400C980.9 398.3 981.4 395.9 982.6 395.9C983.8 396.3 983.9 396.2 984.9 401.8C985.9 407.3 986 413.5 987.2 421.3C988.4 429.1 988.8 431 990.2 437.2C991.7 443.5 991.9 445 993.8 449.6C995.6 454.3 997.1 453.5 998.5 458.5C1000 463.6 999.5 462.2 1000.3 472.7C1001.1 483.3 1001.2 498.2 1002.1 506.4C1003 510 1002.5 510 1004.4 510C1006.3 510 1008.3 507.8 1010.6 506.4C1013 505.1 1013.3 503.8 1015 503.8C1016.8 504.2 1017 504.9 1018.6 508.2C1020.2 511.5 1020.8 515.1 1022.1 518.9C1023.5 522.6 1022.8 523.5 1024.8 525.1C1026.8 525.9 1029.1 525.9 1031 525.9C1033 525 1032.6 524.9 1033.7 520.6C1034.7 516.3 1034.6 511.9 1035.8 506.4C1037 501 1037.5 500.5 1039 495.8C1040.5 491.1 1041.1 490 1042.5 485.2C1044 480.3 1044.5 476.6 1045.7 473.6C1047 471.8 1046.6 471.8 1048.2 471.8C1049.9 472.6 1050.9 475.4 1053.2 477.2C1055.4 478.9 1056.7 478.1 1058.5 479.8C1060.3 481.6 1060 481.8 1061.2 485.2C1062.3 488.5 1062.1 493.7 1063.8 494.9C1065.6 494.9 1066.6 490.7 1069.1 490.5C1071.7 490.5 1072.6 493.7 1075.3 493.7C1078.1 493.5 1079.6 489.6 1081.6 489.6C1083.5 490.8 1083.1 495.4 1084.2 499.3C1085.3 503.2 1085.4 507.3 1086.5 507.3C1087.7 504.5 1088.3 494.8 1089.4 486.6C1090.5 478.5 1089.9 473.9 1091.5 470.3C1093.2 470.3 1095.2 470.3 1097 470.3C1098.8 472.5 1098.6 474.1 1099.8 480.1C1101 486.1 1101.1 494.4 1102.4 497.5C1103.7 497.5 1104.4 495.8 1105.7 494.3C1107 492.7 1107.4 490.6 1108.5 490.6C1109.6 491.8 1109.9 492.4 1110.7 499.7C1111.5 507 1111.4 517.7 1112.2 523.7C1113 526.9 1112.7 526.9 1114.4 526.9C1116.1 525.8 1117.6 521.4 1119.9 518.2C1122.1 515 1122.4 512.4 1124.7 512.4C1127 512.4 1128 518.2 1130.3 518.2C1132.6 516.9 1132.9 509.8 1135.1 506.3C1137.4 502.8 1138.4 502.3 1140.6 502.3C1142.7 502.8 1143.2 505.9 1144.9 508.4C1146.6 511 1146.5 513.9 1148.2 513.9C1149.9 511.5 1150.4 502.6 1152.5 497.5C1154.7 492.5 1156.1 491 1158 491C1159.9 491.5 1159.8 495.2 1161.3 499.7C1162.7 504.3 1162.1 507.1 1164.5 511.7C1166.9 516.3 1168.6 518 1172.1 520.4C1175.7 522.6 1178.2 520.4 1180.9 522.6C1183.5 525 1182 528.6 1184.1 531.3C1186.3 534 1188.5 535 1190.7 535C1192.8 534.8 1192.5 534.6 1193.9 530.2C1195.4 525.8 1195.5 519.7 1197.2 515C1198.9 510.3 1199.6 509.3 1201.6 508.9C1203.5 508.9 1204 509.1 1205.9 512.8C1207.8 516.5 1208.7 522.3 1210.3 525.9C1211.9 529.1 1211.9 529.1 1213.1 529.1C1214.3 528.2 1214.2 525.8 1215.7 521.5C1217.3 517.2 1217.9 512.9 1220.1 509.5C1222.2 506.3 1223.1 507.2 1225.5 506.3C1227.9 505.3 1228.8 505.6 1231 505.2C1233.1 504.7 1234.4 504.3 1235.3 504.1" stroke="#6db8ee" fill="none" stroke-width="1.55" stroke-linejoin="round"/>
<path d="M186 562.8C281.5 562.8 520.1 562.8 620 562.8C640 562.8 632.7 563.2 640 563.2C647.3 563.1 647.3 563.1 653.1 562.4C658.8 561.8 659.2 561.3 666.1 560.3C673.1 559.2 677.9 558.1 684.6 557.8C691.4 557.8 690.2 558.8 696.6 558.9C703.1 558.9 707.3 558.8 714 558.5C720.7 558.1 722.3 558 727.1 557.4C731.9 556.8 732 556.3 735.8 555.7C739.7 555 741.2 555.1 744.5 554.6C747.9 554 747.7 553.7 751.1 553C754.4 552.4 755.9 551.5 759.8 551.5C763.6 551.5 765.5 553 768.5 553C771.5 552.8 771.1 550.2 773.3 550.2C775.4 550.2 775 552.9 778.3 553C781.5 553 784.3 551.7 788.1 550.9C791.9 550 792.8 549.8 795.7 549.1C798.6 548.4 798.5 547.7 801.1 547.6C803.8 547.6 803.9 548.5 807.7 548.7C811.5 548.7 814.3 548.7 818.6 548.2C822.9 547.1 823.4 544.3 827.3 543.2C831.1 543.2 832.2 543.2 836 543.2C839.8 543.6 841.6 544.8 844.7 544.8C847.8 544.5 847.5 543.9 850.1 542.2C852.8 540.4 853.1 538.1 856.7 536.7C860.3 535.6 862.9 535.6 866.5 535.6C870.1 536.8 870.6 540.5 873 542.2C875.4 543.2 875.2 543.2 877.4 543.2C879.5 542.3 880.4 539.2 882.8 537.8C885.2 536.7 885.7 537.8 888.3 536.7C890.8 534.7 891.9 530.8 894.4 528.6C897 526.8 897.4 527 899.8 526.8C902.1 526.8 902.9 526.8 905.1 527.7C907.2 528.9 905.8 531.1 909.5 532.2C913.2 532.7 918 532.2 921.9 532.7C925.8 533.5 924.9 535 927.2 535.7C929.6 535.7 930.2 535.7 932.6 535.7C934.9 536.4 935.5 538.5 937.9 538.7C940.2 538.7 940.7 537.9 943.2 536.6C945.7 535.3 946.9 532.7 949.4 532.7C952 533.3 952.2 537 954.7 539.2C957.3 541.5 958.4 541.6 960.9 542.8C963.5 544 963.9 544.6 966.3 544.6C968.6 544.6 969.8 544.6 971.6 542.8C973.3 540.7 973.2 537.4 974.2 534.8C975.3 532.2 975.6 530.9 976.6 530.9C977.5 531.3 977.6 533.1 978.7 536.6C979.8 540.1 980.3 546.5 981.7 546.9C983.1 546.9 983.4 540.6 984.9 538.4C986.4 536.6 986.5 536.6 988.4 536.6C990.4 536.8 991.5 537.5 993.8 539.2C996 541 996.8 544.6 998.5 544.6C1000.3 543.2 1000.5 536 1001.7 533C1003 530.9 1002.5 531.2 1004.4 530.9C1006.4 530.9 1008.2 530.9 1010.6 531.6C1013.1 532.7 1013.9 535.7 1015.6 535.7C1017.2 535.2 1016.9 534.8 1018.1 529.5C1019.2 524.2 1019.6 517 1020.9 511.8C1022.2 506.5 1022.5 507.1 1023.9 505.5C1025.4 504.7 1025.9 504.7 1027.5 504.7C1029 505.2 1029.4 505.1 1031 508.2C1032.6 511.3 1033 513.4 1034.6 518.9C1036.1 524.3 1036.3 527.6 1038.1 533C1039.9 538.5 1040.4 540.3 1042.5 543.7C1044.7 547.1 1045.5 547.1 1047.9 548.7C1050.2 550.2 1050.4 550.2 1053.2 550.8C1055.9 551.1 1056.8 550.8 1060.3 551.1C1063.8 551.4 1066.4 552.2 1069.1 552.2C1071.9 551.9 1071.3 551 1072.7 549.9C1074.1 548.8 1074.2 547.4 1075.3 547.2C1076.5 547.2 1076.7 548 1078 549C1079.3 550 1080 551.7 1081.2 551.7C1082.4 550.5 1082.5 547.4 1083.3 543.7C1084.2 540 1083.3 537 1085.1 534.8C1087.1 533.9 1089.5 534.6 1092.2 533.9C1094.9 533.2 1096 532.5 1097.5 531.6C1099.1 530.7 1097.8 531.1 1099.2 529.8C1100.5 528.4 1100.4 526.4 1103.5 525.4C1106.6 525.4 1110.3 525.4 1113.3 525.4C1116.3 526.5 1115.6 526.3 1117.2 530.2C1118.9 534.1 1119.3 539.5 1120.9 543.3C1122.6 547.1 1123 547.6 1124.7 547.6C1126.3 547.2 1126.8 545.2 1128.6 541.1C1130.4 537 1131.3 532.5 1132.9 529.1C1134.5 525.9 1134.3 525.9 1135.8 525.9C1137.2 526.3 1138.2 529.6 1139.5 531.3C1140.8 533 1140.4 533.5 1141.6 533.5C1142.8 532 1143.6 527.2 1144.9 524.8C1146.2 522.6 1146.3 522.6 1147.5 522.6C1148.7 523.3 1148.9 524.2 1150.4 528C1151.8 531.9 1152.4 536.3 1154.3 540C1156.2 543.8 1157.1 543.8 1159.1 545C1161.1 545.5 1161.3 545.5 1163.4 545.5C1165.6 544.4 1166 541.9 1168.9 540C1171.8 538.1 1173.6 538.9 1176.5 536.8C1179.4 534.6 1179.8 533.3 1181.9 530.2C1184.1 527.1 1184.3 524.7 1186.3 522.6C1188.3 520.4 1189.4 520.4 1191.1 520.4C1192.8 521.6 1192.6 523.5 1193.9 528C1195.3 532.6 1195.5 536.8 1197.2 541.1C1198.9 545.4 1199.9 547.2 1201.6 547.6C1203.2 547.6 1203.4 546.2 1204.8 543.3C1206.3 540.4 1206.7 538.4 1208.1 534.6C1209.5 530.7 1210.3 528.3 1211.4 525.9C1212.5 523.7 1212.1 523.7 1213.1 523.7C1214.1 524.6 1214.3 526.4 1215.7 530.2C1217.2 534.1 1217.5 538.1 1219.6 541.1C1221.8 543.7 1223 542.9 1225.5 543.7C1228 544.6 1228.8 544.1 1231 545C1233.1 546 1234.4 547.4 1235.3 548.1" stroke="#efa913" fill="none" stroke-width="1.55" stroke-linejoin="round"/>
<line x1="185.5" y1="562.7" x2="1235" y2="562.7" stroke="#19be6b" stroke-width="1.25"/>
<path d="M186 562.8C285.9 562.7 525.3 562.7 640 562.7C707.5 562.7 691.7 562.7 707.5 562.7C711.9 562.5 707.5 561.9 711.9 561.6C717.9 561.6 728.7 561.6 734.7 561.6C739.1 560.2 736.7 556.8 739.1 555.2C741.5 554.6 743.2 555.2 745.6 554.6C748 552.4 745.6 547.4 750 545.4C760.8 545.4 784.1 545.4 794.6 545.4C797.9 545.7 794.6 546.2 797.9 546.5C802 546.8 808.8 546.5 813.1 546.9C817.4 548.1 815.6 550.2 817.5 552C819.4 553.7 817.5 554.2 821.8 554.8C837.4 554.8 860.2 554.8 888.3 554.8C916.3 554.8 934.8 554.7 949.4 554.7C954.7 555.4 949.4 557.2 954.7 557.9C970.5 557.9 1005.6 557.9 1021.3 557.9C1025.7 557.1 1021.3 555.1 1025.7 554.3C1030.6 554.3 1038 554.3 1043.4 554.3C1048.9 555.4 1043.4 558 1050.5 559.4C1075.5 560.3 1132.5 559.6 1156.9 560.3C1161.3 561.1 1156.9 562.2 1161.3 562.8C1178.5 562.8 1219 562.8 1235.3 562.8" stroke="#b7a3dc" fill="none" stroke-width="1.55" stroke-linejoin="round"/>
<path d="M185.7 529.6C186.7 528.3 188.1 523.8 190.4 523.6C192.7 523.6 193.6 528 196.1 528.7C198.6 528.7 199.1 527.9 201.8 526.8C204.5 525.6 205.8 524.6 208.4 523.6C211 522.5 211.4 522 213.7 522C216 523 216.6 527.6 218.8 528.1C221 528.1 221.2 525.3 223.5 524.3C225.9 523.6 226.7 523.6 229.6 523.6C232.5 524.5 233.3 526.6 236.8 528.7C240.2 530.7 242.2 533 245.3 533C248.4 532.7 248.7 528.1 251 527.3C253.3 527.3 253.2 529.4 255.7 529.6C258.2 529.6 259.8 528.5 262.3 528.5C264.9 528.6 265.1 530.4 267.5 530.4C269.8 530.1 270.7 527.7 273.1 527.3C275.5 527.3 276 528.7 278.4 528.7C280.8 528.5 281.2 526.8 284.1 526.8C287 526.8 287.9 527.5 291.7 528.7C295.4 529.8 298.2 531.9 301.1 531.9C304.1 530.2 302.6 523.8 304.9 521.1C307.2 519.8 308.6 519.8 311.6 519.8C314.5 520.6 314.6 523.1 318.2 524.9C321.7 526.6 323.3 525.8 327.6 527.7C332 529.6 334.3 532.9 338.1 533.4C341.8 533.4 341.8 530.6 344.7 530.2C347.6 530.2 347.6 531.5 351.3 531.5C355.1 530.3 358.3 526.7 361.7 524.9C365.2 523.4 364.9 523.4 367 523.4C369.1 524.7 368.8 529.3 371.2 531.1C373.6 531.5 375.1 531.5 377.8 531.5C380.5 530.8 380.8 528.1 383.5 528.1C386.2 528.4 387.6 531.8 390.1 533C392.6 533.4 392.8 533.4 394.8 533.4C396.8 532.3 396.9 529.1 399.2 528.1C401.5 528.1 402.9 528.1 405.3 528.9C407.6 529.9 408.5 532.1 410 533C411.5 533 410 533 411.9 533C414.4 533.2 417.9 533.8 421.4 533.8C424.8 533.2 424.8 530.6 427.4 530.6C430 531.1 430.9 535.4 433.1 536.2C435.3 536.2 435.2 536.2 437.4 534.3C439.7 532.5 440.6 529.3 443.1 527.7C445.6 527.3 446.3 527.3 448.8 527.3C451.3 528 452 530.6 454.5 530.6C457 530.1 457.7 525.4 460.2 525.4C462.7 525.4 463.5 528.6 465.8 530.6C468.2 532.5 468.7 534.3 471 534.3C473.2 533.7 473.8 529.8 476.3 527.7C478.7 525.7 479.4 525.1 481.9 525.1C484.4 525.8 485.1 530.5 487.6 531.1C490.1 531.1 490.8 528.4 493.3 528.1C495.8 528.1 496.5 528.5 499 529.6C501.4 530.7 501.3 533 504.3 533C507.2 532.9 508.6 530.3 512.2 529.2C515.8 528.1 516.6 528.1 520.7 528.1C524.9 528.1 528.2 528.5 531.1 529.2C534 530 532.7 529.8 534 531.5C535.3 533.2 535.3 536.8 537.2 537.2C539.1 537.2 539.7 534.4 542.5 533.4C545.3 532.4 547.4 532.7 550.1 532.4C552.8 532.4 552.7 532.4 554.8 532.4C556.9 531.3 557.5 527.8 559.5 527.3C561.6 527.3 562 529.1 564.3 530.6C566.6 532 567.2 533.8 569.9 533.8C572.7 532.5 574.1 527.3 576.6 524.9C579.1 522.6 579 522.6 581.3 522.6C583.6 522.7 584.6 524 587 525.4C589.4 526.9 589.6 529.2 592.1 529.2C594.6 529 595.9 526 598.3 524.5C600.8 523 600.8 522.4 603.1 522.4C605.4 522.9 606.3 525.2 608.8 526.8C611.2 528.4 611.7 529.2 614.4 529.6C617.1 529.6 618.6 529.3 621.1 528.7C623.5 528 623.5 526.8 625.4 526.8C627.4 528.1 628 534.7 630 534.9C631.9 534.9 632.1 529.2 634.3 527.7C636.5 527.7 637.1 528.1 640 528.1C642.9 527.7 645 525.8 647.6 525.8C650.3 525.8 649.8 528 652 528C654.1 525.9 654.3 518 657.4 516.5C660.5 516.5 662.1 520 666.1 521C670.2 521 671.9 521 675.9 521C680 520.4 681.3 518.2 684.6 518.2C688 518.8 688.4 523.5 691.2 523.6C693.9 523.6 694.2 520 697.1 518.9C699.9 518.2 701.7 518.9 704.2 518.2C706.8 514.9 706.8 514.3 708.6 504C710.4 493.7 710.8 473.8 712.5 471.4C714.2 471.4 714.7 487 716.2 493.2C717.8 499.3 717.6 499.3 719.5 499.3C721.4 499.3 722.9 496.4 724.9 493.2C727 489.9 726.5 485.8 728.9 484.4C731.2 484.4 732.6 487.1 735.8 487.1C739 487.1 740.8 487.1 743.4 484.4C746.1 481 746 476.5 747.8 471.4C749.6 466.2 749.8 461.6 751.5 461.1C753.2 461.1 753.1 465.7 755.4 469.2C757.7 472.6 759.3 475.6 762 476.8C764.6 476.8 765.2 476.8 767.4 474.6C769.6 469.6 769.8 460.4 771.8 454C773.7 447.5 774.2 447.2 776.1 445.2C778 445.2 778.7 445.2 780.5 445.2C782.2 446.7 782.1 451.8 784.2 451.8C786.2 448.8 787.5 433.2 789.8 431.7C792.1 431.7 792.1 440.6 794.6 445.2C797.1 449.9 798.5 452.6 801.1 452.9C803.8 452.9 804.2 448.5 806.6 446.3C809 444.2 809.6 443.1 812 443.1C814.4 444.6 815.1 453.5 817.5 453.5C819.9 453.5 820.8 448.8 822.9 443.1C825.1 437.3 825.5 429.8 827.3 427.4C829.1 427.4 829.9 427.4 831.2 432.2C832.5 439.9 832.1 459.6 833.4 462.7C834.7 462.7 834.8 449.7 837.1 446.3C839.3 446.3 840.7 447.4 843.6 447.4C846.5 446.6 846.6 442.9 850.1 442.6C853.7 442.6 855.2 446.3 859.9 446.3C864.7 445.9 867.9 440.5 871.9 440.5C876 440.9 875.8 445.5 878.5 448.5C881.1 451.5 881.6 454 883.9 454C886.2 453.5 887.2 446.3 888.9 446.3C890.6 449.3 890.6 461.3 891.8 467.4C893 473.5 892.9 473.6 894.4 474.2C896 474.2 895.9 470.8 898.9 470.1C901.8 470.1 905 471 907.7 471C910.5 469.2 909.4 468.4 911.3 462.1C913.2 455.8 912.9 443.2 916.3 442.2C919.6 442.2 923.6 452.5 926.4 457.7C929 462.8 927.9 462.3 929 465.6C930.2 469 929.3 471.2 931.7 472.7C934 472.7 936.7 472.7 939.7 472.7C942.6 472.2 943 472.7 945 470.1C946.9 466.2 947.2 466.9 948.5 455C949.9 443.1 949.9 429.3 951.2 415.9C952.4 402.6 952.8 397.8 954.2 394.3C955.6 394.3 956 397.6 957.4 400C958.8 402.4 959.3 405.3 960.6 405.3C961.8 397.5 961.9 375 963.1 364.5C964.2 357.8 964.3 357.8 965.7 357.8C967.2 358.6 967.6 364.8 969.8 368.1C972.1 371.3 973.7 369 976 372.5C978.4 376 978.3 379.1 980.5 384C982.6 388.9 983.8 389.6 985.8 394.7C987.7 399.7 987.6 399.7 989.3 407.1C991.1 414.5 991.8 421.3 993.8 428.4C995.7 435.4 996.8 432.4 998.2 439C999.6 445.6 999.3 450.2 1000.3 458.5C1001.3 466.9 1001.1 472.9 1002.6 477.2C1004.1 478.1 1004.5 478.1 1007.1 478.1C1009.6 477.9 1011.8 478.1 1014.2 476.3C1016.5 473.9 1016.2 470.2 1017.7 467.4C1019.2 464.6 1019.1 463.5 1020.9 463.5C1022.7 463.9 1023.5 467 1025.7 469.2C1027.9 471.4 1028.5 473.2 1031 473.6C1033.5 473.6 1034.5 471.9 1037.2 471C1039.9 470 1041.5 471 1043.4 469.2C1045.4 466.7 1045.1 462.2 1046.1 459.4C1047.1 456.8 1046.5 456.8 1047.9 456.8C1049.2 457.4 1050.1 460.1 1052.3 462.1C1054.4 464 1055.7 463.3 1057.6 465.6C1059.6 468 1059.8 469 1061.2 472.7C1062.5 476.4 1062.1 480.9 1063.8 482.5C1065.6 482.5 1066.4 480.7 1069.1 479.8C1071.9 478.9 1072.3 478.9 1076.2 478.4C1080.1 477.9 1083.8 478.4 1086.9 477.7C1090 469.7 1088.7 450.2 1090.4 442C1092.2 440.5 1093 440.5 1094.8 440.5C1096.6 440.9 1096.9 440.5 1098.5 444.2C1100.1 448.6 1100.6 457.6 1102 460.5C1103.4 460.5 1103.6 459.1 1105 457.2C1106.5 455.4 1107.2 452.2 1108.5 452.2C1109.9 453.4 1109.8 455.1 1111.1 462.7C1112.4 470.3 1112.7 479.9 1114.4 486.6C1116.1 493.2 1116.4 491 1118.8 493.2C1121.2 495.3 1122.7 496.4 1125.3 496.4C1127.9 496 1128.8 496.4 1130.8 491C1132.7 485.5 1132.8 476 1134 471.4C1135.2 469.9 1134.8 469.9 1136.2 469.9C1137.6 470.3 1138.2 472.5 1140.6 473.6C1143 474.6 1144.5 474.7 1147.1 474.7C1149.7 474.1 1150.1 471 1152.5 471C1154.9 471 1156.1 471.2 1158 474.7C1159.9 478.1 1159.8 482.6 1161.3 486.6C1162.7 490.7 1161.6 491.3 1164.5 493.2C1167.4 495.1 1171 495.4 1174.3 495.4C1177.7 495.4 1177.4 493.3 1179.8 493.2C1182.2 493.2 1182.8 494.7 1185.2 494.9C1187.6 494.9 1188 494.3 1190.7 494.3C1193.3 494.4 1194.3 495.4 1197.2 495.4C1200.1 494.3 1201.3 490.8 1203.7 489.3C1206.1 488.4 1205 488.4 1208.1 488.4C1211.2 488.7 1214.3 490.6 1217.9 490.6C1221.5 490.6 1221.8 489 1224.4 488.4C1227.1 487.8 1227.5 487.7 1229.9 487.7C1232.3 487.8 1234.1 488.6 1235.3 488.8" stroke="#c2db55" fill="none" stroke-width="1.55" stroke-linejoin="round"/>
<path d="M184.4 562.75 H661 M1161.5 562.75 H1235.6" stroke="#a6a4bf" stroke-width="1.3" fill="none"/>
<line x1="185.5" y1="562.6" x2="185.5" y2="565.6" stroke="#4aa5de" stroke-width="1"/>
<text x="185.5" y="574.4" text-anchor="middle" textLength="19.6" lengthAdjust="spacingAndGlyphs" class="ax">00:00</text>
<line x1="213" y1="562.6" x2="213" y2="565.6" stroke="#4aa5de" stroke-width="1"/>
<text x="213" y="574.4" text-anchor="middle" textLength="19.6" lengthAdjust="spacingAndGlyphs" class="ax">00:25</text>
<line x1="240.4" y1="562.6" x2="240.4" y2="565.6" stroke="#4aa5de" stroke-width="1"/>
<text x="240.4" y="574.4" text-anchor="middle" textLength="19.6" lengthAdjust="spacingAndGlyphs" class="ax">00:50</text>
<line x1="267.9" y1="562.6" x2="267.9" y2="565.6" stroke="#4aa5de" stroke-width="1"/>
<text x="267.9" y="574.4" text-anchor="middle" textLength="19.6" lengthAdjust="spacingAndGlyphs" class="ax">01:15</text>
<line x1="295.4" y1="562.6" x2="295.4" y2="565.6" stroke="#4aa5de" stroke-width="1"/>
<text x="295.4" y="574.4" text-anchor="middle" textLength="19.6" lengthAdjust="spacingAndGlyphs" class="ax">01:40</text>
<line x1="322.9" y1="562.6" x2="322.9" y2="565.6" stroke="#4aa5de" stroke-width="1"/>
<text x="322.9" y="574.4" text-anchor="middle" textLength="19.6" lengthAdjust="spacingAndGlyphs" class="ax">02:05</text>
<line x1="350.3" y1="562.6" x2="350.3" y2="565.6" stroke="#4aa5de" stroke-width="1"/>
<text x="350.3" y="574.4" text-anchor="middle" textLength="19.6" lengthAdjust="spacingAndGlyphs" class="ax">02:30</text>
<line x1="377.8" y1="562.6" x2="377.8" y2="565.6" stroke="#4aa5de" stroke-width="1"/>
<text x="377.8" y="574.4" text-anchor="middle" textLength="19.6" lengthAdjust="spacingAndGlyphs" class="ax">02:55</text>
<line x1="405.3" y1="562.6" x2="405.3" y2="565.6" stroke="#4aa5de" stroke-width="1"/>
<text x="405.3" y="574.4" text-anchor="middle" textLength="19.6" lengthAdjust="spacingAndGlyphs" class="ax">03:20</text>
<line x1="432.8" y1="562.6" x2="432.8" y2="565.6" stroke="#4aa5de" stroke-width="1"/>
<text x="432.8" y="574.4" text-anchor="middle" textLength="19.6" lengthAdjust="spacingAndGlyphs" class="ax">03:45</text>
<line x1="460.2" y1="562.6" x2="460.2" y2="565.6" stroke="#4aa5de" stroke-width="1"/>
<text x="460.2" y="574.4" text-anchor="middle" textLength="19.6" lengthAdjust="spacingAndGlyphs" class="ax">04:10</text>
<line x1="487.7" y1="562.6" x2="487.7" y2="565.6" stroke="#4aa5de" stroke-width="1"/>
<text x="487.7" y="574.4" text-anchor="middle" textLength="19.6" lengthAdjust="spacingAndGlyphs" class="ax">04:35</text>
<line x1="515.2" y1="562.6" x2="515.2" y2="565.6" stroke="#4aa5de" stroke-width="1"/>
<text x="515.2" y="574.4" text-anchor="middle" textLength="19.6" lengthAdjust="spacingAndGlyphs" class="ax">05:00</text>
<line x1="542.7" y1="562.6" x2="542.7" y2="565.6" stroke="#4aa5de" stroke-width="1"/>
<text x="542.7" y="574.4" text-anchor="middle" textLength="19.6" lengthAdjust="spacingAndGlyphs" class="ax">05:25</text>
<line x1="570.1" y1="562.6" x2="570.1" y2="565.6" stroke="#4aa5de" stroke-width="1"/>
<text x="570.1" y="574.4" text-anchor="middle" textLength="19.6" lengthAdjust="spacingAndGlyphs" class="ax">05:50</text>
<line x1="597.6" y1="562.6" x2="597.6" y2="565.6" stroke="#4aa5de" stroke-width="1"/>
<text x="597.6" y="574.4" text-anchor="middle" textLength="19.6" lengthAdjust="spacingAndGlyphs" class="ax">06:15</text>
<line x1="625.1" y1="562.6" x2="625.1" y2="565.6" stroke="#4aa5de" stroke-width="1"/>
<text x="625.1" y="574.4" text-anchor="middle" textLength="19.6" lengthAdjust="spacingAndGlyphs" class="ax">06:40</text>
<line x1="652.6" y1="562.6" x2="652.6" y2="565.6" stroke="#4aa5de" stroke-width="1"/>
<text x="652.6" y="574.4" text-anchor="middle" textLength="19.6" lengthAdjust="spacingAndGlyphs" class="ax">07:05</text>
<line x1="680" y1="562.6" x2="680" y2="565.6" stroke="#4aa5de" stroke-width="1"/>
<text x="680" y="574.4" text-anchor="middle" textLength="19.6" lengthAdjust="spacingAndGlyphs" class="ax">07:30</text>
<line x1="707.5" y1="562.6" x2="707.5" y2="565.6" stroke="#4aa5de" stroke-width="1"/>
<text x="707.5" y="574.4" text-anchor="middle" textLength="19.6" lengthAdjust="spacingAndGlyphs" class="ax">07:55</text>
<line x1="735" y1="562.6" x2="735" y2="565.6" stroke="#4aa5de" stroke-width="1"/>
<text x="735" y="574.4" text-anchor="middle" textLength="19.6" lengthAdjust="spacingAndGlyphs" class="ax">08:20</text>
<line x1="762.5" y1="562.6" x2="762.5" y2="565.6" stroke="#4aa5de" stroke-width="1"/>
<text x="762.5" y="574.4" text-anchor="middle" textLength="19.6" lengthAdjust="spacingAndGlyphs" class="ax">08:45</text>
<line x1="789.9" y1="562.6" x2="789.9" y2="565.6" stroke="#4aa5de" stroke-width="1"/>
<text x="789.9" y="574.4" text-anchor="middle" textLength="19.6" lengthAdjust="spacingAndGlyphs" class="ax">09:10</text>
<line x1="817.4" y1="562.6" x2="817.4" y2="565.6" stroke="#4aa5de" stroke-width="1"/>
<text x="817.4" y="574.4" text-anchor="middle" textLength="19.6" lengthAdjust="spacingAndGlyphs" class="ax">09:35</text>
<line x1="844.9" y1="562.6" x2="844.9" y2="565.6" stroke="#4aa5de" stroke-width="1"/>
<text x="844.9" y="574.4" text-anchor="middle" textLength="19.6" lengthAdjust="spacingAndGlyphs" class="ax">10:00</text>
<line x1="872.3" y1="562.6" x2="872.3" y2="565.6" stroke="#4aa5de" stroke-width="1"/>
<text x="872.3" y="574.4" text-anchor="middle" textLength="19.6" lengthAdjust="spacingAndGlyphs" class="ax">10:25</text>
<line x1="899.8" y1="562.6" x2="899.8" y2="565.6" stroke="#4aa5de" stroke-width="1"/>
<text x="899.8" y="574.4" text-anchor="middle" textLength="19.6" lengthAdjust="spacingAndGlyphs" class="ax">10:50</text>
<line x1="927.3" y1="562.6" x2="927.3" y2="565.6" stroke="#4aa5de" stroke-width="1"/>
<text x="927.3" y="574.4" text-anchor="middle" textLength="19.6" lengthAdjust="spacingAndGlyphs" class="ax">11:15</text>
<line x1="954.8" y1="562.6" x2="954.8" y2="565.6" stroke="#4aa5de" stroke-width="1"/>
<text x="954.8" y="574.4" text-anchor="middle" textLength="19.6" lengthAdjust="spacingAndGlyphs" class="ax">11:40</text>
<line x1="982.2" y1="562.6" x2="982.2" y2="565.6" stroke="#4aa5de" stroke-width="1"/>
<text x="982.2" y="574.4" text-anchor="middle" textLength="19.6" lengthAdjust="spacingAndGlyphs" class="ax">12:05</text>
<line x1="1009.7" y1="562.6" x2="1009.7" y2="565.6" stroke="#4aa5de" stroke-width="1"/>
<text x="1009.7" y="574.4" text-anchor="middle" textLength="19.6" lengthAdjust="spacingAndGlyphs" class="ax">12:30</text>
<line x1="1037.2" y1="562.6" x2="1037.2" y2="565.6" stroke="#4aa5de" stroke-width="1"/>
<text x="1037.2" y="574.4" text-anchor="middle" textLength="19.6" lengthAdjust="spacingAndGlyphs" class="ax">12:55</text>
<line x1="1064.7" y1="562.6" x2="1064.7" y2="565.6" stroke="#4aa5de" stroke-width="1"/>
<text x="1064.7" y="574.4" text-anchor="middle" textLength="19.6" lengthAdjust="spacingAndGlyphs" class="ax">13:20</text>
<line x1="1092.1" y1="562.6" x2="1092.1" y2="565.6" stroke="#4aa5de" stroke-width="1"/>
<text x="1092.1" y="574.4" text-anchor="middle" textLength="19.6" lengthAdjust="spacingAndGlyphs" class="ax">13:45</text>
<line x1="1119.6" y1="562.6" x2="1119.6" y2="565.6" stroke="#4aa5de" stroke-width="1"/>
<text x="1119.6" y="574.4" text-anchor="middle" textLength="19.6" lengthAdjust="spacingAndGlyphs" class="ax">14:10</text>
<line x1="1147.1" y1="562.6" x2="1147.1" y2="565.6" stroke="#4aa5de" stroke-width="1"/>
<text x="1147.1" y="574.4" text-anchor="middle" textLength="19.6" lengthAdjust="spacingAndGlyphs" class="ax">14:35</text>
<line x1="1174.6" y1="562.6" x2="1174.6" y2="565.6" stroke="#4aa5de" stroke-width="1"/>
<text x="1174.6" y="574.4" text-anchor="middle" textLength="19.6" lengthAdjust="spacingAndGlyphs" class="ax">15:00</text>
<line x1="1202" y1="562.6" x2="1202" y2="565.6" stroke="#4aa5de" stroke-width="1"/>
<text x="1202" y="574.4" text-anchor="middle" textLength="19.6" lengthAdjust="spacingAndGlyphs" class="ax">15:25</text>
<line x1="1229.5" y1="562.6" x2="1229.5" y2="565.6" stroke="#4aa5de" stroke-width="1"/>
<text x="1229.5" y="574.4" text-anchor="middle" textLength="19.6" lengthAdjust="spacingAndGlyphs" class="ax">15:50</text>
<text x="180.6" y="565.3" text-anchor="end" textLength="4.7" lengthAdjust="spacingAndGlyphs" class="ax">0</text>
<text x="180.6" y="523.3" text-anchor="end" textLength="9.4" lengthAdjust="spacingAndGlyphs" class="ax">50</text>
<text x="180.6" y="481.3" text-anchor="end" textLength="14" lengthAdjust="spacingAndGlyphs" class="ax">100</text>
<text x="180.6" y="439.3" text-anchor="end" textLength="14" lengthAdjust="spacingAndGlyphs" class="ax">150</text>
<text x="180.6" y="397.3" text-anchor="end" textLength="14" lengthAdjust="spacingAndGlyphs" class="ax">200</text>
<text x="180.6" y="355.3" text-anchor="end" textLength="14" lengthAdjust="spacingAndGlyphs" class="ax">250</text>
<text x="186" y="340.6" text-anchor="middle" textLength="12.4" lengthAdjust="spacingAndGlyphs" class="ax">kW</text>
<rect x="187" y="579.2" width="1049.7" height="23.5" fill="#e8eefc"/>
<rect x="187" y="579.2" width="1049.7" height="4.3" fill="#dbe2f2"/>
<path d="M187.2 599.7C188.2 599.6 189.6 599.3 191.9 599.3C194.2 599.3 195.1 599.6 197.6 599.7C200.1 599.7 200.6 599.6 203.3 599.5C206 599.4 207.3 599.4 209.9 599.3C212.5 599.2 212.9 599.2 215.2 599.2C217.5 599.2 218.1 599.6 220.3 599.6C222.5 599.6 222.7 599.4 225 599.3C227.4 599.3 228.2 599.3 231.1 599.3C234 599.3 234.8 599.5 238.3 599.7C241.8 599.8 243.7 600 246.8 600C249.9 600 250.2 599.6 252.5 599.6C254.8 599.6 254.7 599.7 257.2 599.7C259.7 599.7 261.3 599.6 263.9 599.6C266.4 599.7 266.6 599.8 269 599.8C271.3 599.8 272.2 599.6 274.6 599.6C277.1 599.6 277.5 599.7 279.9 599.7C282.4 599.7 282.7 599.5 285.6 599.5C288.5 599.5 289.5 599.6 293.2 599.7C296.9 599.7 299.7 599.9 302.7 599.9C305.6 599.8 304.2 599.3 306.5 599.1C308.7 599 310.2 599 313.1 599C316 599 316.2 599.2 319.7 599.4C323.2 599.5 324.8 599.4 329.2 599.6C333.5 599.7 335.8 600 339.6 600C343.3 600 343.3 599.8 346.2 599.8C349.1 599.8 349.1 599.9 352.8 599.9C356.6 599.8 359.8 599.5 363.2 599.4C366.7 599.3 366.5 599.3 368.5 599.3C370.6 599.4 370.3 599.7 372.7 599.9C375.1 599.9 376.6 599.9 379.3 599.9C382 599.8 382.3 599.6 385 599.6C387.7 599.6 389.1 599.9 391.6 600C394.1 600 394.4 600 396.4 600C398.4 599.9 398.4 599.7 400.7 599.6C403 599.6 404.4 599.6 406.8 599.7C409.2 599.8 410.1 599.9 411.5 600C413 600 411.5 600 413.4 600C415.9 600 419.5 600.1 422.9 600.1C426.3 600 426.4 599.8 429 599.8C431.5 599.8 432.4 600.2 434.6 600.2C436.8 600.2 436.8 600.2 439 600.1C441.2 600 442.2 599.7 444.7 599.6C447.2 599.6 447.9 599.6 450.4 599.6C452.9 599.6 453.5 599.8 456 599.8C458.5 599.8 459.2 599.4 461.7 599.4C464.2 599.4 465 599.7 467.4 599.8C469.8 600 470.2 600.1 472.5 600.1C474.8 600 475.4 599.7 477.8 599.6C480.2 599.4 481 599.4 483.5 599.4C486 599.4 486.7 599.8 489.2 599.9C491.7 599.9 492.3 599.6 494.8 599.6C497.3 599.6 498.1 599.7 500.5 599.7C502.9 599.8 502.9 600 505.8 600C508.7 600 510.2 599.8 513.8 599.7C517.4 599.6 518.1 599.6 522.3 599.6C526.5 599.6 529.8 599.6 532.7 599.7C535.5 599.8 534.2 599.7 535.5 599.9C536.9 600 536.9 600.3 538.8 600.3C540.6 600.3 541.2 600.1 544.1 600C546.9 600 548.9 600 551.6 600C554.3 600 554.3 600 556.4 600C558.5 599.9 559 599.6 561.1 599.6C563.2 599.6 563.5 599.7 565.8 599.8C568.1 599.9 568.8 600.1 571.5 600.1C574.2 600 575.6 599.6 578.1 599.4C580.6 599.2 580.6 599.2 582.9 599.2C585.2 599.2 586.2 599.3 588.6 599.4C590.9 599.5 591.2 599.7 593.7 599.7C596.2 599.7 597.5 599.5 599.9 599.3C602.3 599.2 602.4 599.2 604.7 599.2C606.9 599.2 607.8 599.4 610.3 599.5C612.8 599.6 613.3 599.7 616 599.7C618.7 599.7 620.2 599.7 622.6 599.7C625.1 599.6 625 599.5 627 599.5C628.9 599.6 629.6 600.1 631.5 600.1C633.5 600.1 633.7 599.7 635.9 599.6C638.1 599.6 638.6 599.6 641.6 599.6C644.5 599.6 646.6 599.5 649.2 599.5C651.8 599.5 651.4 599.6 653.6 599.6C655.7 599.5 655.9 598.9 659 598.9C662.1 598.9 663.7 599.2 667.7 599.3C671.8 599.3 673.5 599.3 677.5 599.3C681.6 599.3 682.9 599.2 686.2 599.2C689.6 599.3 690 599.6 692.8 599.6C695.5 599.6 695.8 599.3 698.7 599.2C701.5 599.1 703.3 599.2 705.8 599.1C708.4 598.9 708.4 598.8 710.2 598.3C712 597.8 712.4 596.9 714.1 596.7C715.8 596.7 716.3 597.3 717.8 597.5C719.4 597.7 719.2 597.7 721.1 597.7C723 597.6 724.5 597.5 726.5 597.3C728.6 597.1 728.1 596.7 730.5 596.7C732.8 596.7 734.2 597 737.4 597C740.6 597 742.4 597 745 596.7C747.7 596.5 747.6 596.2 749.4 595.8C751.2 595.4 751.4 594.8 753.1 594.8C754.8 594.8 754.7 595.4 757 595.8C759.3 596.2 760.9 596.5 763.6 596.6C766.2 596.6 766.9 596.6 769 596.3C771.2 595.9 771.4 595.4 773.4 594.9C775.3 594.4 775.8 594.2 777.7 594C779.6 593.9 780.3 593.9 782.1 593.9C783.8 594.1 783.7 594.6 785.8 594.6C787.8 594.4 789.1 593.2 791.4 593.2C793.7 593.2 793.7 593.9 796.2 594.4C798.7 594.8 800.1 595.2 802.8 595.2C805.4 595.2 805.8 594.7 808.2 594.5C810.6 594.3 811.3 594.2 813.7 594.2C816.1 594.3 816.7 594.9 819.1 594.9C821.5 594.9 822.2 594.5 824.5 594.1C826.9 593.8 828.1 593.2 830 593.2C831.9 593.2 832.1 593.6 833.3 594.3C834.5 595 834.2 596.2 835.4 596.3C836.6 596.3 836.5 595.1 838.7 594.8C840.9 594.8 842.4 594.9 845.2 594.9C848.1 594.9 848.2 594.6 851.8 594.6C855.4 594.7 858 595.1 861.6 595.2C865.2 595.2 865.3 595.2 868.1 595.2C870.9 595.1 871.6 594.5 874.2 594.5C876.8 594.5 877.7 594.8 880.1 595.1C882.5 595.5 882.8 595.9 885.1 596C887.4 596 888.7 595.3 890.5 595.3C892.4 595.6 892.2 596.8 893.4 597.4C894.6 598 894.3 597.9 896.1 598.1C897.8 598.3 899 598.3 901.4 598.3C903.7 598.2 904.6 598.2 906.7 598C908.9 597.8 909.4 597.7 911.1 597.3C912.9 596.9 913.2 596.6 914.7 596.1C916.2 595.5 916.5 594.9 917.9 594.8C919.3 594.8 919.5 595.4 920.9 595.7C922.3 596 922.7 595.9 924.5 596.1C926.2 596.2 927.3 596.2 928.9 596.4C930.4 596.7 930.5 597 931.5 597.3C932.6 597.6 932.1 597.6 933.9 597.6C935.6 597.6 937.1 597.4 939.5 597.3C942 597.2 942.7 597.3 944.9 597.2C947 597.1 947.7 597 949.3 596.5C950.9 595.9 951 595.8 952 594.7C952.9 593.7 952.7 592.4 953.7 591.6C954.7 591.2 955 591.2 956.4 591.2C957.8 591.2 958.6 591.4 959.9 591.6C961.2 591.7 961.3 591.8 962.2 591.8C963.2 591.4 963.3 590.3 964.4 589.5C965.4 588.6 965.7 588.2 967 588C968.4 588 969 588.2 970.6 588.5C972.1 588.8 972.5 589 974.1 589.3C975.8 589.7 976.5 590 978 590.1C979.6 590.1 979.9 590 981.2 589.9C982.6 589.7 983.1 589.6 984.2 589.6C985.4 589.6 985.5 589.6 986.5 590C987.6 590.4 987.7 590.9 988.9 591.5C990 592.1 990.4 592.2 991.9 592.7C993.3 593.2 993.6 593.3 995.4 593.7C997.2 594 998.8 593.9 1000.2 594.3C1001.6 594.7 1001.2 594.6 1002 595.4C1002.8 596.2 1002.9 597.3 1003.8 598C1004.6 598.2 1004.2 598.2 1006.1 598.2C1007.9 598.2 1009.9 598.1 1012.3 598C1014.6 597.9 1014.9 597.8 1016.7 597.8C1018.5 597.8 1018.7 597.9 1020.3 598.1C1021.8 598.4 1022.4 598.6 1023.8 598.9C1025.2 599.2 1024.5 599.3 1026.5 599.4C1028.4 599.5 1030.7 599.5 1032.7 599.5C1034.6 599.4 1034.3 599.4 1035.3 599.1C1036.4 598.7 1036.3 598.4 1037.5 598C1038.6 597.6 1039.2 597.5 1040.7 597.2C1042.1 596.8 1042.7 596.7 1044.2 596.4C1045.7 596 1046.1 595.7 1047.4 595.5C1048.6 595.3 1048.2 595.3 1049.9 595.3C1051.5 595.4 1052.6 595.6 1054.8 595.7C1057.1 595.9 1058.4 595.8 1060.2 595.9C1061.9 596.1 1061.7 596.1 1062.8 596.4C1064 596.6 1063.7 597 1065.5 597.1C1067.2 597.1 1068.3 596.8 1070.8 596.8C1073.3 596.8 1074.3 597 1077 597C1079.8 597 1081.3 596.7 1083.2 596.7C1085.2 596.8 1084.8 597.1 1085.9 597.4C1087 597.7 1087.1 598 1088.2 598C1089.3 597.8 1089.9 597.1 1091 596.5C1092.1 595.8 1091.5 595.5 1093.2 595.2C1094.9 595.2 1096.8 595.2 1098.7 595.2C1100.5 595.4 1100.3 595.5 1101.5 596C1102.7 596.4 1102.8 597.1 1104.1 597.3C1105.4 597.3 1106 597.2 1107.4 597C1108.7 596.9 1109.1 596.8 1110.2 596.8C1111.3 596.9 1111.6 596.9 1112.4 597.5C1113.2 598 1113.1 598.8 1113.9 599.3C1114.7 599.5 1114.4 599.5 1116.1 599.5C1117.8 599.4 1119.3 599.1 1121.5 598.9C1123.8 598.6 1124 598.4 1126.3 598.4C1128.6 598.4 1129.7 598.9 1132 598.9C1134.3 598.8 1134.5 598.2 1136.8 598C1139 597.7 1140.1 597.7 1142.2 597.7C1144.4 597.7 1144.9 597.9 1146.6 598.1C1148.3 598.3 1148.2 598.5 1149.9 598.5C1151.5 598.4 1152.1 597.7 1154.2 597.3C1156.4 596.9 1157.8 596.8 1159.7 596.8C1161.6 596.8 1161.5 597.1 1162.9 597.5C1164.4 597.8 1163.8 598 1166.2 598.4C1168.6 598.7 1170.2 598.9 1173.8 599C1177.4 599.2 1179.9 599 1182.6 599.2C1185.2 599.4 1183.7 599.7 1185.8 599.9C1188 600.1 1190.2 600.1 1192.4 600.1C1194.5 600.1 1194.2 600.1 1195.6 599.8C1197.1 599.4 1197.2 599 1198.9 598.6C1200.6 598.3 1201.3 598.2 1203.3 598.2C1205.2 598.2 1205.7 598.2 1207.6 598.5C1209.5 598.7 1210.4 599.2 1212 599.5C1213.5 599.7 1213.6 599.7 1214.8 599.7C1216 599.6 1215.9 599.4 1217.4 599.1C1218.9 598.8 1219.6 598.5 1221.8 598.2C1223.9 598 1224.8 598 1227.2 598C1229.6 597.9 1230.5 597.9 1232.7 597.9C1234.8 597.8 1236.1 597.8 1237 597.8L1237 602.7 L187.2 602.7Z" fill="#d2defa" stroke="#c6d5f6" stroke-width="0.6"/>
<line x1="187.4" y1="583.5" x2="187.4" y2="602.7" stroke="#b5c4e6" stroke-width="0.8"/>
<line x1="1235.9" y1="583.5" x2="1235.9" y2="602.7" stroke="#b5c4e6" stroke-width="0.8"/>
<rect x="185.4" y="586.8" width="4.6" height="12.6" rx="1.6" fill="#fff" stroke="#c3c9dc" stroke-width="0.8"/>
<rect x="1233.8" y="586.8" width="4.6" height="12.6" rx="1.6" fill="#fff" stroke="#c3c9dc" stroke-width="0.8"/>
<circle cx="860.2" cy="336.2" r="3.3" fill="#73b9ef"/>
<circle cx="925.2" cy="336.2" r="3.3" fill="#e6a817"/>
<circle cx="989.1" cy="336.2" r="3.3" fill="#19be6b"/>
<circle cx="1053.4" cy="336.2" r="3.3" fill="#f8474c"/>
<circle cx="1101.6" cy="336.2" r="3.3" fill="#b6a2de"/>
<circle cx="1158" cy="336.2" r="3.3" fill="#bfd94a"/>
<path d="M1210.6 333 h5.6 v7.8 h-8 v-5.6 M1208.3 330.8 v4.4 M1206.1 333 h4.4" fill="none" stroke="#666" stroke-width="0.75"/>
<path d="M1226 333 h6.8 v7.8 h-8.4 v-6 M1227.2 330.6 l-2.4 2.4 l2.4 2.4" fill="none" stroke="#666" stroke-width="0.75"/>
<path d="M1245.4 331 v7.6 M1241.4 334.8 l4 3.8 l4 -3.8 M1241.2 338.8 v2 h8.5 v-2" fill="none" stroke="#666" stroke-width="0.75"/>
<path d="M1245 495.7 h8.8 M1245 498.8 h8.8 M1245 501.7 h8.8" stroke="#444" stroke-width="0.7"/>
<circle cx="1247.8" cy="495.7" r="1.1" fill="#222"/><circle cx="1251" cy="498.8" r="1.1" fill="#222"/><circle cx="1249.2" cy="501.7" r="1.1" fill="#222"/>
</svg>
<div class="lg jt" style="left:867.1px;width:47.5px">电网交互功率</div>
<div class="lg jt" style="left:931.8px;width:47.5px">光伏发电功率</div>
<div class="lg jt" style="left:995.7px;width:47.5px">风力发电功率</div>
<div class="lg jt" style="left:1060px;width:31.7px">储能功率</div>
<div class="lg jt" style="left:1108.2px;width:39.6px">充电桩功率</div>
<div class="lg jt" style="left:1164.9px;width:31.7px">负荷功率</div>
</body></html>
